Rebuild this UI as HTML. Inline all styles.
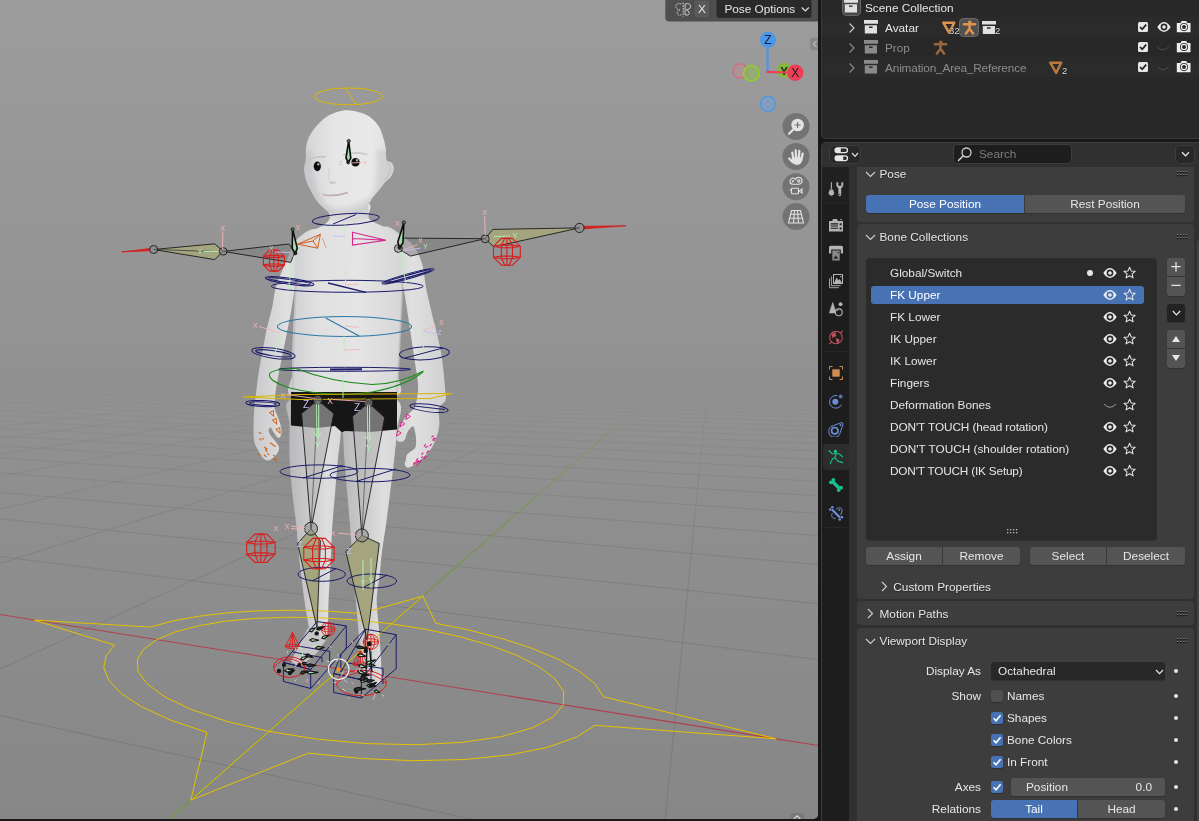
<!DOCTYPE html>
<html>
<head>
<meta charset="utf-8">
<style>
*{box-sizing:border-box;margin:0;padding:0}
html,body{width:1199px;height:821px;overflow:hidden;background:#181818;font-family:"Liberation Sans",sans-serif;font-size:11.8px;color:#e6e6e6}
.abs{position:absolute}
#vp{will-change:transform;position:absolute;left:0;top:0;width:818px;height:819px;border-radius:0 0 5px 0;overflow:hidden;background:#929292}
#vp svg{position:absolute;left:0;top:0}
#outlbg{position:absolute;left:821px;top:-6px;width:384px;height:145px;background:#282828;border-radius:5px;border:1px solid #383838}
#outl{will-change:transform;position:absolute;left:822px;top:-6px;width:383px;height:145px;overflow:hidden}
.orow{position:absolute;left:0;width:383px;height:20px}
#outlbg i{position:absolute;left:0;width:1px;height:20px;background:#2b2b2b;margin-top:-1px}
.orow.alt{background:#2b2b2b}
.t{position:absolute;white-space:nowrap;line-height:14px}
#propsbg{position:absolute;left:821px;top:142px;width:384px;height:690px;background:#303030;border-radius:5px;overflow:hidden;border:1px solid #3c3c3c}
#propsbg div{position:absolute;left:0;top:24px;width:1px;height:670px;background:#1d1d1d}
#props{will-change:transform;position:absolute;left:822px;top:142px;width:383px;height:690px;overflow:hidden}
#tabs{position:absolute;left:0;top:25px;width:27px;height:670px;background:#1d1d1d}
.panel{position:absolute;left:35px;width:337px;background:#3d3d3d;border-radius:4px}
.btn{position:absolute;box-shadow:0 1px 1px rgba(0,0,0,0.200);background:#545454;height:18px;text-align:center;line-height:18px;white-space:nowrap;color:#e6e6e6}
.btn.sel{background:#4772b3;color:#fff}
.lrow{position:absolute;left:5px;width:273px;height:18px;border-radius:3px}
.lrow .t{left:19px;top:2px}
.lbl{position:absolute;white-space:nowrap;text-align:right;line-height:14px}
.cb{position:absolute;width:12px;height:12px;border-radius:2.5px;background:#505050;box-shadow:0 1px 1px rgba(0,0,0,0.250)}
.cb.on{background:#4772b3}
.dot{position:absolute;width:4.400px;height:4.400px;border-radius:2.200px;background:#e4e4e4;margin:-0.200px 0 0 -0.200px}
</style>
</head>
<body>
<svg width="0" height="0" style="position:absolute">
<defs>
<symbol id="i-coll" viewBox="0 0 15 15"><path d="M0 1h14v3.600h-14z M0.800 6h12.200v8h-12.200z M5 7.200v1.600h3.600v-1.600z" fill-rule="evenodd"/></symbol>
<symbol id="i-mesh" viewBox="0 0 16 15"><path d="M2.300 2.700 L13.200 2.700 L8.200 12.800 Z" fill="none" stroke-width="2.500" stroke-linejoin="round"/></symbol>
<symbol id="i-arm" viewBox="0 0 15 15"><circle cx="7.800" cy="2.300" r="1.700"/><path d="M1.900 4.300 H13.100 M7.500 4.600 V8.800 L3.900 13.600 M7.500 8.800 L11.100 13.600" fill="none" stroke="currentColor" stroke-width="2.500" stroke-linecap="round" stroke-linejoin="round"/></symbol>
<symbol id="i-eye" viewBox="0 0 14 14"><path d="M0.300 7 C2.500 3.600 5 2.100 7 2.100 C9 2.100 11.500 3.600 13.700 7 C11.500 10.400 9 11.900 7 11.900 C5 11.900 2.500 10.400 0.300 7 Z M7 3.600 A3.400 3.400 0 1 0 7 10.400 A3.400 3.400 0 1 0 7 3.600 Z M7 5.200 A1.800 1.800 0 1 0 7 8.800 A1.800 1.800 0 1 0 7 5.200 Z" fill="#ececec" fill-rule="evenodd"/></symbol>
<symbol id="i-cam" viewBox="0 0 15 14"><path d="M0.800 4 h3.700 l1.100 -2.100 h4.600 l1.100 2.100 h3.200 v9.200 h-13.700 z M4.00 7.9 a4 4 0 1 0 8 0 a4 4 0 1 0 -8 0 z M4.80 7.9 a3.2 3.2 0 1 0 6.4 0 a3.2 3.2 0 1 0 -6.4 0 z M6.00 7.9 a2 2 0 1 0 4 0 a2 2 0 1 0 -4 0 z" fill="#ececec" fill-rule="evenodd"/></symbol>
<symbol id="i-star" viewBox="0 0 14 14"><path d="M7 1.300 L8.700 5.200 L12.900 5.600 L9.700 8.400 L10.700 12.600 L7 10.400 L3.300 12.600 L4.300 8.400 L1.100 5.600 L5.300 5.200 Z" fill="none" stroke="#e6e6e6" stroke-width="1.100" stroke-linejoin="round"/></symbol>
</defs>
</svg>
<div id="vp">
<svg width="818" height="819" viewBox="0 0 818 819">
<defs>
<linearGradient id="bg" x1="0" y1="0" x2="0" y2="1"><stop offset="0" stop-color="#9c9c9c"/><stop offset="0.45" stop-color="#929292"/><stop offset="1" stop-color="#878787"/></linearGradient>
</defs>
<rect width="818" height="819" fill="url(#bg)"/>
<!--SCENE-->
<defs><linearGradient id="gfade" x1="0" y1="342" x2="0" y2="819" gradientUnits="userSpaceOnUse"><stop offset="0" stop-color="#fff" stop-opacity="0"/><stop offset="0.05" stop-color="#fff" stop-opacity="0"/><stop offset="0.12" stop-color="#fff" stop-opacity="0.120"/><stop offset="0.22" stop-color="#fff" stop-opacity="0.400"/><stop offset="0.40" stop-color="#fff" stop-opacity="0.800"/><stop offset="0.60" stop-color="#fff" stop-opacity="1"/><stop offset="1" stop-color="#fff" stop-opacity="1"/></linearGradient><mask id="gmask" maskUnits="userSpaceOnUse" x="0" y="0" width="818" height="819"><rect x="0" y="0" width="818" height="819" fill="url(#gfade)"/></mask></defs>
<g mask="url(#gmask)" fill="none">
<path d="M-1728.3 417.5 L602.8 345.4 M-1729.2 420.0 L606.2 345.4 M-1730.1 422.8 L609.6 345.4 M-1731.2 425.7 L612.9 345.4 M-1732.2 428.8 L616.3 345.4 M-1733.4 432.2 L619.7 345.4 M-1734.7 435.8 L623.1 345.4 M-1736.1 439.7 L626.5 345.4 M-1737.6 444.0 L630.0 345.4 M-1739.2 448.7 L633.4 345.4 M-1741.0 453.9 L636.9 345.4 M-1743.0 459.5 L640.3 345.4 M-1745.1 465.8 L643.8 345.4 M-1747.6 472.8 L647.3 345.4 M-1750.3 480.6 L650.7 345.4 M-1753.4 489.4 L654.2 345.5 M-1756.8 499.4 L657.8 345.5 M-1760.8 510.8 L661.3 345.5 M-1765.4 524.0 L664.8 345.5 M-1770.8 539.5 L668.3 345.5 M-1777.2 557.9 L671.9 345.5 M-1784.9 580.0 L675.4 345.5 M-1794.4 607.1 L679.0 345.5 M-1806.3 641.3 L682.6 345.5 M-1821.7 685.6 L686.2 345.5 M-1842.5 745.3 L689.8 345.5 M-1872.0 830.0 L693.4 345.5 M-1917.3 959.8 L697.0 345.5 M-1995.3 1183.7 L700.7 345.5 M-2162.0 1662.1 L704.3 345.5 M151.1 6053.8 L711.7 345.5 M6088.1 6053.8 L715.3 345.5 M12025.1 6053.8 L719.0 345.5 M17962.0 6053.8 L722.7 345.6 M23899.0 6053.8 L726.4 345.6 M29836.0 6053.8 L730.2 345.6 M35772.9 6053.8 L733.9 345.6 M41709.9 6053.8 L737.7 345.6 M47646.9 6053.8 L741.4 345.6 M53583.8 6053.8 L745.2 345.6 M59520.8 6053.8 L749.0 345.6 M65457.8 6053.8 L752.8 345.6 M-1695.2 347.8 L7379.0 8083.5 M-1685.5 347.8 L20466.3 8083.5 M-1675.9 347.7 L33553.5 8083.5 M-1656.9 347.7 L59728.1 8083.5 M-1647.5 347.7 L72815.3 8083.5 M-1638.2 347.6 L85902.6 8083.5 M-1629.0 347.6 L98989.9 8083.5 M-1619.8 347.6 L25950.6 2223.5 M-1610.7 347.6 L11602.0 1153.8 M-1601.7 347.5 L7654.8 859.6 M-1592.7 347.5 L5807.8 721.9 M-1583.8 347.5 L4737.0 642.1 M-1575.0 347.5 L4038.1 590.0 M-1566.3 347.5 L3546.0 553.3 M-1557.6 347.4 L3180.8 526.0 M-1548.9 347.4 L2898.9 505.0 M-1540.4 347.4 L2674.8 488.3 M-1531.9 347.4 L2492.4 474.7 M-1523.5 347.4 L2341.0 463.4 M-1515.1 347.3 L2213.3 453.9 M-1506.8 347.3 L2104.2 445.8 M-1498.6 347.3 L2009.9 438.8 M-1490.4 347.3 L1927.5 432.6 M-1482.3 347.3 L1855.0 427.2 M-1474.2 347.2 L1790.6 422.4 M-1466.2 347.2 L1733.1 418.1 M-1458.3 347.2 L1681.4 414.3 M-1450.4 347.2 L1634.7 410.8 M-1442.6 347.2 L1592.3 407.6 M-1434.8 347.1 L1553.6 404.7 M-1427.1 347.1 L1518.2 402.1 M-1419.4 347.1 L1485.7 399.7 M-1411.8 347.1 L1455.6 397.4 M-1404.3 347.1 L1427.8 395.4 M-1396.8 347.1 L1402.0 393.4 M-1389.3 347.0 L1378.1 391.7 M-1381.9 347.0 L1355.7 390.0 M-1374.6 347.0 L1334.7 388.4 M-1367.3 347.0 L1315.1 387.0 M-1360.1 347.0 L1296.7 385.6 M-1352.9 347.0 L1279.4 384.3 M-1345.8 346.9 L1263.1 383.1 M-1338.7 346.9 L1247.7 381.9 M-1331.6 346.9 L1233.1 380.8 M-1324.6 346.9 L1219.3 379.8 M-1317.7 346.9 L1206.2 378.8 M-1310.8 346.9 L1193.8 377.9 M-1303.9 346.8 L1182.0 377.0 M-1297.1 346.8 L1170.7 376.2 M-1290.4 346.8 L1160.0 375.4 M-1283.7 346.8 L1149.7 374.6 M-1277.0 346.8 L1140.0 373.9 M-1270.4 346.8 L1130.6 373.2 M-1263.8 346.7 L1121.7 372.5 M-1257.3 346.7 L1113.1 371.9 M-1250.8 346.7 L1104.8 371.3 M-1244.3 346.7 L1097.0 370.7 M-1237.9 346.7 L1089.4 370.1 M-1231.6 346.7 L1082.1 369.6 M-1225.2 346.6 L1075.1 369.1 M-1218.9 346.6 L1068.3 368.6 M-1212.7 346.6 L1061.8 368.1 M-1206.5 346.6 L1055.5 367.6 M-1200.3 346.6 L1049.5 367.2 M-1194.2 346.6 L1043.6 366.7 M-1188.1 346.6 L1038.0 366.3 M-1182.1 346.5 L1032.5 365.9 M-1176.1 346.5 L1027.3 365.5 M-1170.1 346.5 L1022.2 365.1 M-1164.2 346.5 L1017.2 364.8 M-1158.3 346.5 L1012.4 364.4 M-1152.4 346.5 L1007.8 364.1 M-1146.6 346.5 L1003.3 363.7 M-1140.8 346.4 L998.9 363.4 M-1135.1 346.4 L994.7 363.1 M-1129.4 346.4 L990.6 362.8 M-1123.7 346.4 L986.6 362.5 M-1118.0 346.4 L982.7 362.2 M-1112.4 346.4 L978.9 361.9 M-1106.9 346.4 L975.3 361.6 M-1101.3 346.3 L971.7 361.4 M-1095.8 346.3 L968.2 361.1" stroke="#555" stroke-opacity="0.260" stroke-width="1"/>
<path d="M-1666.4 347.7 L69997.4 11823.7" stroke="#b0414b" stroke-width="1.100"/>
<path d="M-5376.4 5693.9 L708.0 345.5" stroke="#6f9a3c" stroke-width="1.100"/>
</g>
<defs>
<linearGradient id="skinH" x1="0" y1="0" x2="1" y2="0"><stop offset="0" stop-color="#d4d4d6"/><stop offset="0.35" stop-color="#e6e6e6"/><stop offset="0.75" stop-color="#e9e9e9"/><stop offset="1" stop-color="#dcdcdc"/></linearGradient>
<linearGradient id="torsoG" x1="0" y1="0" x2="1" y2="0"><stop offset="0" stop-color="#cdcdd0"/><stop offset="0.25" stop-color="#e0e0e0"/><stop offset="0.6" stop-color="#e5e5e5"/><stop offset="1" stop-color="#d6d6d6"/></linearGradient>
<linearGradient id="legG" x1="0" y1="0" x2="1" y2="0"><stop offset="0" stop-color="#b6b6b9"/><stop offset="0.35" stop-color="#c8c8ca"/><stop offset="0.7" stop-color="#dedede"/><stop offset="1" stop-color="#d6d6d6"/></linearGradient>
<linearGradient id="armG" x1="0" y1="0" x2="1" y2="0"><stop offset="0" stop-color="#c9c9cc"/><stop offset="0.5" stop-color="#e0e0e0"/><stop offset="1" stop-color="#d0d0d2"/></linearGradient>
<linearGradient id="neckG" x1="0" y1="0" x2="0" y2="1"><stop offset="0" stop-color="#c6c6c8"/><stop offset="1" stop-color="#dedede"/></linearGradient>
<filter id="b1"><feGaussianBlur stdDeviation="0.6"/></filter>
<filter id="b3"><feGaussianBlur stdDeviation="2.5"/></filter>
</defs>
<g filter="url(#b1)">
<path d="M289.6 425.0 C289.5 435.1 289.2 449.1 289.6 460.4 C290.1 471.6 291.2 481.8 292.3 492.5 C293.4 503.2 295.4 516.7 296.3 524.7 C297.2 532.8 296.9 533.6 297.6 540.8 C298.3 547.9 299.2 557.8 300.3 567.6 C301.4 577.4 303.1 591.0 304.3 599.7 C305.5 608.4 306.4 613.9 307.5 619.6 C308.6 625.3 309.2 630.6 311.0 634.0 C312.8 637.4 315.3 639.7 318.0 640.0 C320.7 640.3 325.3 639.4 327.0 636.0 C328.7 632.6 327.8 625.6 328.1 619.6 C328.4 613.6 328.3 606.6 328.6 599.7 C328.9 592.8 329.4 586.3 329.8 578.3 C330.2 570.3 330.7 560.4 331.1 551.5 C331.5 542.6 331.7 534.5 332.4 524.7 C333.1 514.9 334.2 503.2 335.1 492.5 C336.0 481.8 336.8 470.8 337.8 460.4 C338.8 450.0 340.5 440.1 341.0 430.0 C341.5 419.9 349.5 405.0 341.0 400.0 C332.5 395.0 298.6 395.8 290.0 400.0 C281.4 404.2 289.7 414.9 289.6 425.0 Z" fill="url(#legG)"/>
<path d="M343.0 430.0 C343.2 440.1 343.8 450.0 344.5 460.4 C345.2 470.8 346.3 481.8 347.2 492.5 C348.1 503.2 349.1 514.9 349.9 524.7 C350.7 534.5 351.3 542.6 352.0 551.5 C352.7 560.4 353.3 570.3 353.9 578.3 C354.5 586.3 355.1 591.5 355.8 599.7 C356.5 607.9 357.5 619.1 358.2 627.5 C358.9 635.9 359.0 642.6 360.0 650.0 C361.0 657.4 362.0 666.3 364.0 672.0 C366.0 677.7 369.3 682.4 372.0 684.0 C374.7 685.6 378.9 685.4 380.4 681.4 C381.9 677.4 381.3 669.0 381.0 660.0 C380.7 651.0 379.5 637.5 378.8 627.5 C378.1 617.5 376.6 607.9 376.7 599.7 C376.8 591.5 378.4 586.3 379.3 578.3 C380.2 570.3 380.9 560.4 382.0 551.5 C383.1 542.6 384.6 534.5 386.0 524.7 C387.4 514.9 388.8 503.2 390.1 492.5 C391.5 481.8 393.0 470.6 394.1 460.4 C395.2 450.1 396.3 441.1 396.8 431.0 C397.3 420.9 406.0 405.2 397.0 400.0 C388.0 394.8 352.0 395.0 343.0 400.0 C334.0 405.0 342.8 419.9 343.0 430.0 Z" fill="url(#legG)"/>
<path d="M308 628 L298 648 L291 661 L299 667 L316 654 L326 640 Z" fill="#c6c6c8"/>
<path d="M315.0 229.5 C311.7 227.2 304.1 233.3 300.3 236.2 C296.5 239.1 294.8 242.4 292.3 246.9 C289.9 251.4 288.3 256.5 285.6 263.0 C282.9 269.5 278.4 278.3 276.2 285.7 C274.0 293.1 273.8 300.0 272.2 307.2 C270.6 314.4 268.4 321.5 266.8 328.6 C265.2 335.7 264.1 342.9 262.8 350.0 C261.5 357.1 259.9 364.4 258.8 371.5 C257.7 378.6 256.8 387.3 256.1 392.9 C255.4 398.5 255.0 400.5 254.6 405.0 C254.2 409.5 253.7 414.2 253.6 420.0 C253.5 425.8 253.3 435.0 254.0 440.0 C254.7 445.0 256.5 447.0 258.0 450.0 C259.5 453.0 261.2 456.2 263.0 458.0 C264.8 459.8 266.7 460.7 268.5 460.5 C270.3 460.3 272.4 458.4 274.0 457.0 C275.6 455.6 277.2 453.6 278.0 452.0 C278.8 450.4 279.3 449.2 279.0 447.5 C278.7 445.8 277.3 443.9 276.0 442.0 C274.7 440.1 272.2 437.9 271.0 436.0 C269.8 434.1 268.6 431.9 268.5 430.5 C268.4 429.1 269.7 427.2 270.5 427.5 C271.3 427.8 272.4 430.4 273.5 432.0 C274.6 433.6 275.9 436.1 277.0 437.0 C278.1 437.9 279.2 438.1 280.0 437.3 C280.8 436.5 281.4 434.1 281.5 432.0 C281.6 429.9 281.2 427.7 280.5 425.0 C279.8 422.3 278.5 418.8 277.5 416.0 C276.5 413.2 274.9 410.7 274.5 408.0 C274.1 405.3 274.5 403.4 274.8 400.0 C275.1 396.6 275.3 393.2 276.2 387.6 C277.1 382.0 278.6 374.2 280.2 366.1 C281.8 358.1 283.8 348.2 285.6 339.3 C287.4 330.4 289.3 321.0 290.9 312.5 C292.4 304.0 293.4 295.5 294.9 288.4 C296.4 281.3 295.8 276.4 300.0 270.0 C304.2 263.6 317.5 256.8 320.0 250.0 C322.5 243.2 318.3 231.8 315.0 229.5 Z" fill="url(#armG)"/>
<path d="M384.7 226.8 C388.2 224.3 395.9 231.5 400.8 234.8 C405.7 238.2 410.6 242.0 414.2 246.9 C417.8 251.8 420.2 257.4 422.2 264.3 C424.2 271.2 424.6 280.4 426.2 288.4 C427.8 296.4 429.6 304.0 431.6 312.5 C433.6 321.0 436.5 331.2 438.3 339.3 C440.1 347.4 441.2 352.8 442.3 360.8 C443.4 368.9 444.5 381.1 445.0 387.6 C445.5 394.1 446.5 396.5 445.5 400.0 C444.5 403.5 439.9 404.6 438.9 408.6 C437.9 412.6 439.8 419.5 439.4 424.2 C439.0 428.9 438.1 432.6 436.8 436.6 C435.5 440.6 433.7 444.7 431.6 448.0 C429.5 451.3 427.2 453.5 424.4 456.3 C421.6 459.1 417.8 462.7 415.0 464.6 C412.2 466.5 409.5 467.7 407.8 467.7 C406.1 467.7 405.1 465.8 404.7 464.6 C404.3 463.4 405.3 462.1 405.7 460.4 C406.1 458.7 405.8 456.3 407.3 454.2 C408.9 452.1 413.5 450.4 415.0 448.0 C416.5 445.6 416.1 442.5 416.1 439.7 C416.1 436.9 415.5 433.6 415.0 431.4 C414.5 429.1 414.2 426.2 413.0 426.2 C411.8 426.2 409.2 429.1 407.8 431.4 C406.4 433.6 405.9 438.0 404.7 439.7 C403.5 441.4 401.9 441.8 400.5 441.8 C399.1 441.8 397.0 441.1 396.4 439.7 C395.8 438.3 396.2 435.9 396.9 433.5 C397.6 431.1 399.0 428.0 400.5 425.2 C402.0 422.4 403.8 419.3 405.7 416.9 C407.6 414.5 410.3 412.2 411.9 410.7 C413.4 409.1 413.9 411.5 415.0 407.6 C416.1 403.8 418.1 394.5 418.2 387.6 C418.3 380.7 416.6 374.2 415.5 366.1 C414.4 358.1 412.8 348.2 411.5 339.3 C410.2 330.4 408.8 321.0 407.5 312.5 C406.2 304.0 405.1 295.8 403.5 288.4 C401.9 281.0 401.9 274.4 398.0 268.0 C394.1 261.6 382.2 256.9 380.0 250.0 C377.8 243.1 381.2 229.3 384.7 226.8 Z" fill="url(#armG)"/>
<path d="M329.8 218.0 C328.5 221.8 326.1 223.3 322.0 226.0 C317.9 228.7 309.3 230.7 305.0 234.0 C300.7 237.3 297.8 240.3 296.0 246.0 C294.2 251.7 294.7 260.9 294.5 268.0 C294.3 275.1 295.1 279.6 295.0 288.4 C294.9 297.2 294.1 310.3 293.6 320.6 C293.2 330.9 292.5 341.1 292.3 350.0 C292.1 358.9 292.4 366.5 292.3 374.2 C292.2 381.9 282.9 391.7 291.5 396.0 C300.1 400.3 326.4 400.0 344.0 400.0 C361.6 400.0 388.0 400.3 397.0 396.0 C406.0 391.7 397.7 381.9 398.1 374.2 C398.5 366.5 398.9 358.9 399.4 350.0 C399.8 341.1 400.4 330.9 400.8 320.6 C401.2 310.3 401.7 297.5 402.1 288.4 C402.5 279.3 403.0 273.1 403.0 266.0 C403.0 258.9 403.5 251.7 402.0 246.0 C400.5 240.3 397.7 235.5 394.0 232.0 C390.3 228.5 384.2 227.3 380.0 225.0 C375.8 222.7 370.5 221.7 368.5 218.0 C366.5 214.3 374.4 205.5 368.0 203.0 C361.6 200.5 336.4 200.5 330.0 203.0 C323.6 205.5 331.1 214.2 329.8 218.0 Z" fill="url(#torsoG)"/>
<path d="M330 205 L368 203 L368.500 218 Q352 227 330 220 Z" fill="url(#neckG)"/>
<path d="M296 280 Q294 330 292.500 392" fill="none" stroke="#bcbcc2" stroke-width="2" opacity="0.700"/><path d="M402.500 280 Q400.500 330 397 392" fill="none" stroke="#c2c2c6" stroke-width="2" opacity="0.700"/>
<path d="M291.0 392.0 L397.0 392.0 L397.0 429.5 L370.0 432.0 L345.0 431.0 L341.8 432.3 L335.0 426.0 L316.0 428.0 L290.9 425.6 Z" fill="#161616"/>
<path d="M344.6 110.3 C339.9 110.8 333.8 112.9 329.6 115.0 C325.4 117.1 322.5 119.8 319.3 123.0 C316.1 126.2 312.8 130.2 310.6 134.0 C308.4 137.8 307.1 141.5 306.3 145.9 C305.5 150.3 306.2 156.5 305.8 160.2 C305.4 163.9 304.2 164.8 304.2 168.0 C304.2 171.2 304.9 175.8 305.8 179.2 C306.7 182.6 308.1 185.2 309.8 188.6 C311.5 192.0 313.9 196.5 316.1 199.7 C318.3 202.9 320.9 205.5 323.2 207.6 C325.4 209.7 326.8 211.4 329.6 212.4 C332.4 213.4 336.3 213.7 340.0 213.5 C343.7 213.3 347.4 212.5 352.0 211.0 C356.6 209.5 364.2 206.7 367.6 204.5 C371.0 202.3 370.2 200.8 372.3 198.1 C374.4 195.4 378.1 191.2 380.2 188.6 C382.3 186.0 383.1 184.4 385.0 182.3 C386.9 180.2 389.9 178.4 391.3 176.0 C392.8 173.6 393.7 170.2 393.7 168.0 C393.7 165.8 392.5 163.8 391.3 162.5 C390.1 161.2 387.5 162.4 386.6 160.2 C385.7 157.9 386.3 152.7 385.8 149.0 C385.3 145.3 384.6 141.8 383.4 138.0 C382.2 134.2 381.0 129.7 378.6 126.1 C376.2 122.5 372.6 119.0 369.2 116.6 C365.8 114.2 362.1 113.0 358.0 111.9 C353.9 110.9 349.3 109.8 344.6 110.3 Z" fill="url(#skinH)"/>
</g>
<clipPath id="headclip"><path d="M344.6 110.3 C339.9 110.8 333.8 112.9 329.6 115.0 C325.4 117.1 322.5 119.8 319.3 123.0 C316.1 126.2 312.8 130.2 310.6 134.0 C308.4 137.8 307.1 141.5 306.3 145.9 C305.5 150.3 306.2 156.5 305.8 160.2 C305.4 163.9 304.2 164.8 304.2 168.0 C304.2 171.2 304.9 175.8 305.8 179.2 C306.7 182.6 308.1 185.2 309.8 188.6 C311.5 192.0 313.9 196.5 316.1 199.7 C318.3 202.9 320.9 205.5 323.2 207.6 C325.4 209.7 326.8 211.4 329.6 212.4 C332.4 213.4 336.3 213.7 340.0 213.5 C343.7 213.3 347.4 212.5 352.0 211.0 C356.6 209.5 364.2 206.7 367.6 204.5 C371.0 202.3 370.2 200.8 372.3 198.1 C374.4 195.4 378.1 191.2 380.2 188.6 C382.3 186.0 383.1 184.4 385.0 182.3 C386.9 180.2 389.9 178.4 391.3 176.0 C392.8 173.6 393.7 170.2 393.7 168.0 C393.7 165.8 392.5 163.8 391.3 162.5 C390.1 161.2 387.5 162.4 386.6 160.2 C385.7 157.9 386.3 152.7 385.8 149.0 C385.3 145.3 384.6 141.8 383.4 138.0 C382.2 134.2 381.0 129.7 378.6 126.1 C376.2 122.5 372.6 119.0 369.2 116.6 C365.8 114.2 362.1 113.0 358.0 111.9 C353.9 110.9 349.3 109.8 344.6 110.3 Z"/></clipPath>
<g clip-path="url(#headclip)"><g filter="url(#b3)">
<path d="M300 150 L312 150 Q311 185 326 206 L340 218 L318 218 L300 190 Z" fill="#bfbfc4" opacity="0.600"/>
<path d="M376 150 Q381 176 368 206 L392 200 L396 150 Z" fill="#c4c4c8" opacity="0.550"/>
<path d="M326 205 Q345 214 372 196 L372 222 L326 222 Z" fill="#c2c2c6" opacity="0.500"/>
</g></g>
<g filter="url(#b1)">
<path d="M386.500 163 Q391 165 390 171 Q388 177 384.500 180" fill="none" stroke="#c4c4c4" stroke-width="1.300"/>
<ellipse cx="332.500" cy="182.500" rx="3.500" ry="1.600" fill="#c6c6c8" opacity="0.800"/>
<path d="M329.500 168 Q328 176 329.500 181" fill="none" stroke="#d6d6d8" stroke-width="1.500"/>
<path d="M307.500 160.500 Q316 155.500 325.500 157" fill="none" stroke="#c6c6c6" stroke-width="1.800"/>
<path d="M343 155 Q355 151 367.500 154.500" fill="none" stroke="#cacaca" stroke-width="1.800"/>
<path d="M322.500 194.500 Q334 197 347.800 192.600" fill="none" stroke="#c4aeb2" stroke-width="1.700"/>
</g>
<ellipse cx="317.300" cy="166.400" rx="3.600" ry="4.800" fill="#0c0c0c"/><ellipse cx="318.300" cy="164.300" rx="1" ry="1.300" fill="#bbb"/>
<ellipse cx="355.500" cy="162.300" rx="4.200" ry="4.300" fill="#0c0c0c"/><ellipse cx="357" cy="160.300" rx="1" ry="1.200" fill="#bbb"/>
<path d="M563.3 704.8 L563.7 691.9 L555.2 679.0 L539.1 666.7 L516.8 655.3 L489.6 645.2 L459.0 636.5 L425.9 629.3 L391.4 623.8 L356.3 620.0 L321.5 617.8 L287.6 617.2 L255.3 618.4 L225.4 621.2 L198.5 625.8 L175.3 631.9 L156.8 639.7 L143.8 648.9 L137.3 659.6 L138.1 671.3 L147.1 683.9 L164.9 696.9 L191.5 709.6 L226.6 721.3 L269.0 731.4 L316.7 739.1 L366.9 743.6 L416.6 744.7 L462.6 742.3 L501.9 736.5 L532.4 727.8 L553.0 717.0 Z" fill="none" stroke="#e6c200" stroke-width="1"/>
<path d="M776.2 738.8 L603.8 696.8 L594.6 683.5 L578.6 670.7 L557.0 658.7 L530.9 647.9 L501.4 638.4 L469.4 630.1 L435.8 623.3 L422.8 596.2 L360.8 613.5 L326.2 611.1 L292.3 610.2 L259.6 610.8 L228.6 612.7 L199.7 616.1 L173.4 620.8 L150.4 627.1 L34.4 620.1 L114.6 645.2 L106.1 655.7 L103.8 667.4 L108.5 679.9 L120.9 693.2 L141.4 706.7 L170.2 720.0 L207.0 732.4 L190.8 800.1 L308.4 753.1 L361.3 758.5 L414.4 760.7 L464.8 759.5 L509.9 754.9 L547.5 747.3 L576.1 737.3 L595.1 725.4 Z" fill="none" stroke="#e6c200" stroke-width="1"/>
<path d="M192.5 798.7 L423.8 595.3" fill="none" stroke="#e6c200" stroke-width="1"/>
<ellipse cx="348.4" cy="96.4" rx="34" ry="8.4" fill="none" stroke="#dcb800" stroke-width="1"/>
<path d="M345 88.2 L356.5 104.3" stroke="#dcb800" stroke-width="1" fill="none"/>
<ellipse cx="345.8" cy="219.3" rx="33.5" ry="5.6" fill="none" stroke="#1b1b6b" stroke-width="1" transform="rotate(-3.5 345.8 219.3)"/>
<path d="M333 224 L356 214.5" stroke="#1b1b6b" stroke-width="1" fill="none"/>
<ellipse cx="347.2" cy="286.3" rx="76" ry="6" fill="none" stroke="#1b1b6b" stroke-width="1"/>
<path d="M328 283 L366 292.3" stroke="#1b1b6b" stroke-width="1.3" fill="none"/>
<ellipse cx="289.6" cy="281.2" rx="24.5" ry="3" fill="none" stroke="#1b1b6b" stroke-width="1" transform="rotate(8 289.6 281.2)"/>
<ellipse cx="289.6" cy="281.2" rx="21" ry="1.6" fill="none" stroke="#1b1b6b" stroke-width="1" transform="rotate(8 289.6 281.2)"/>
<ellipse cx="408" cy="276.3" rx="27" ry="2.5" fill="none" stroke="#1b1b6b" stroke-width="1" transform="rotate(-15.5 408 276.3)"/>
<ellipse cx="408" cy="276.3" rx="24" ry="1.2" fill="none" stroke="#1b1b6b" stroke-width="1.4" transform="rotate(-15.5 408 276.3)"/>
<ellipse cx="344.5" cy="326.5" rx="67" ry="10" fill="none" stroke="#2a78a8" stroke-width="1.1"/>
<path d="M325.7 318 L359.2 336" stroke="#2a78a8" stroke-width="1.1" fill="none"/>
<ellipse cx="273.5" cy="353.3" rx="21.8" ry="5" fill="none" stroke="#1b1b6b" stroke-width="1" transform="rotate(8 273.5 353.3)"/>
<ellipse cx="273.5" cy="353.3" rx="18" ry="2.6" fill="none" stroke="#1b1b6b" stroke-width="1" transform="rotate(8 273.5 353.3)"/>
<ellipse cx="424.4" cy="353.3" rx="25" ry="6.5" fill="none" stroke="#1b1b6b" stroke-width="1" transform="rotate(-3 424.4 353.3)"/>
<path d="M405 358 L443 348" stroke="#1b1b6b" stroke-width="1" fill="none"/>
<ellipse cx="344.5" cy="369.3" rx="66" ry="2" fill="none" stroke="#1b1b6b" stroke-width="1"/>
<path d="M330 369.6 L362 369.2" stroke="#1b1b6b" stroke-width="2" fill="none"/>
<path d="M296 368.500 Q272 369 269.500 374 Q268 381 290 388 Q330 398 372 392 Q405 386 423 372" fill="none" stroke="#1c8a1c" stroke-width="1.1"/>
<path d="M296 368.500 Q330 382 372 384.500 Q400 384 423.500 371" fill="none" stroke="#1c8a1c" stroke-width="1.1"/>
<path d="M243 397 L300 394.500 L452 393.500 L430 398.500 L300 399.500 Z" fill="none" stroke="#d8b600" stroke-width="1"/>
<ellipse cx="262.8" cy="403.6" rx="17" ry="3" fill="none" stroke="#1b1b6b" stroke-width="1" transform="rotate(3 262.8 403.6)"/>
<ellipse cx="262.8" cy="403.6" rx="13" ry="1.6" fill="none" stroke="#1b1b6b" stroke-width="1" transform="rotate(3 262.8 403.6)"/>
<ellipse cx="429" cy="408.1" rx="19.2" ry="3.8" fill="none" stroke="#1b1b6b" stroke-width="1" transform="rotate(7 429 408.1)"/>
<path d="M414 406 L445 409.5" stroke="#1b1b6b" stroke-width="1" fill="none"/>
<path d="M121.900 251.900 L149.400 248.600 L149.400 250.800 Z" fill="#d42020" stroke="#d42020" stroke-width="0.800"/>
<path d="M153.7 249.5 L214.6 243.8 L223.2 251.4 L214.6 259.6 Z" fill="#a4a47e" fill-opacity="1.0" stroke="#1a1a1a" stroke-width="0.900" stroke-linejoin="round"/>
<path d="M153.7 249.5 L214.6 251.5" stroke="#1a1a1a" stroke-width="0.6" fill="none"/>
<path d="M223.2 251.4 L288.9 244.0 L295.0 252.5 L290.7 262.4 Z" fill="#7c7c7c" fill-opacity="0.55" stroke="#1a1a1a" stroke-width="0.900" stroke-linejoin="round"/>
<circle cx="153.7" cy="249.5" r="4" fill="#8d8d8d" fill-opacity="0.550" stroke="#1a1a1a" stroke-width="0.900"/>
<circle cx="223.2" cy="251.4" r="3.8" fill="#8d8d8d" fill-opacity="0.550" stroke="#1a1a1a" stroke-width="0.900"/>
<g fill="none" stroke="#d81e1e" stroke-width="1.1" stroke-linejoin="round"><path d="M284.4 265.0 L278.3 271.1 L269.5 271.1 L263.4 265.0 L263.4 256.2 L269.5 250.1 L278.3 250.1 L284.4 256.2 Z"/><path d="M278.3 265.0 L275.7 271.1 L272.1 271.1 L269.5 265.0 L269.5 256.2 L272.1 250.1 L275.7 250.1 L278.3 256.2 Z"/><path d="M263.4 256.3 L269.3 257.4 L278.5 257.4 L284.4 256.3 L278.5 255.4 L269.3 255.4 Z"/><path d="M263.4 264.9 L269.3 266.1 L278.5 266.1 L284.4 264.9 L278.5 264.0 L269.3 264.0 Z"/><path d="M273.9 250.1 L273.9 271.1"/></g>
<path d="M583.800 226.300 L626.100 225.800 L583.800 228.800 Z" fill="#d42020" stroke="#d42020" stroke-width="0.800"/>
<path d="M398.4 248.5 L403.9 238.1 L485.0 238.7 L410.4 256.1 Z" fill="#7c7c7c" fill-opacity="0.55" stroke="#1a1a1a" stroke-width="0.900" stroke-linejoin="round"/>
<path d="M485.2 238.8 L492.8 229.4 L579.5 227.9 L493.8 246.8 Z" fill="#a4a47e" fill-opacity="1.0" stroke="#1a1a1a" stroke-width="0.900" stroke-linejoin="round"/>
<circle cx="398.4" cy="248.5" r="4" fill="#8d8d8d" fill-opacity="0.550" stroke="#1a1a1a" stroke-width="0.900"/>
<circle cx="485.2" cy="238.8" r="4" fill="#8d8d8d" fill-opacity="0.550" stroke="#1a1a1a" stroke-width="0.900"/>
<circle cx="579.5" cy="227.9" r="4.6" fill="#8d8d8d" fill-opacity="0.550" stroke="#1a1a1a" stroke-width="0.900"/>
<g fill="none" stroke="#d81e1e" stroke-width="1.1" stroke-linejoin="round"><path d="M520.3 257.3 L512.4 265.2 L501.4 265.2 L493.5 257.3 L493.5 246.3 L501.4 238.4 L512.4 238.4 L520.3 246.3 Z"/><path d="M512.5 257.3 L509.2 265.2 L504.6 265.2 L501.3 257.3 L501.3 246.3 L504.6 238.4 L509.2 238.4 L512.5 246.3 Z"/><path d="M493.6 246.3 L501.1 247.7 L512.7 247.7 L520.2 246.3 L512.7 245.1 L501.1 245.1 Z"/><path d="M493.6 257.3 L501.1 258.8 L512.7 258.8 L520.2 257.3 L512.7 256.1 L501.1 256.1 Z"/><path d="M506.9 238.5 L506.9 265.1"/></g>
<path d="M292.6 229.4 L292.2 248.7 L295.3 253.2 L297.3 248.1 Z" fill="#9fdcaa" stroke="#0c0c0c" stroke-width="1.600" stroke-linejoin="round"/><circle cx="292.6" cy="229.4" r="1.600" fill="#4c7a55" stroke="#111" stroke-width="0.800"/><circle cx="295.3" cy="253.2" r="1.600" fill="#222" stroke="#111" stroke-width="0.800"/>
<path d="M403.9 222.5 L397.8 242.0 L399.5 247.5 L402.9 243.0 Z" fill="#9fdcaa" stroke="#0c0c0c" stroke-width="1.600" stroke-linejoin="round"/><circle cx="403.9" cy="222.5" r="1.600" fill="#4c7a55" stroke="#111" stroke-width="0.800"/><circle cx="399.5" cy="247.5" r="1.600" fill="#222" stroke="#111" stroke-width="0.800"/>
<path d="M348.7 141.0 L346.0 158.0 L348.3 162.3 L350.8 158.1 Z" fill="#9fdcaa" stroke="#0c0c0c" stroke-width="1.600" stroke-linejoin="round"/><circle cx="348.7" cy="141" r="1.600" fill="#4c7a55" stroke="#111" stroke-width="0.800"/><circle cx="348.3" cy="162.3" r="1.600" fill="#222" stroke="#111" stroke-width="0.800"/>
<path d="M297.600 244.200 L320.400 234.300 L317.700 248.200 Z M297.600 244.200 L313 241 L320.400 234.300 M313 241 L317.700 248.200" fill="none" stroke="#d2601a" stroke-width="1"/>
<path d="M322.500 238 L326 248" stroke="#e58a6a" stroke-width="0.800"/>
<path d="M352.500 232.200 L386 240.200 L352.500 245 Z M352.500 238.500 L386 240.200" fill="none" stroke="#d6248a" stroke-width="1.100"/>
<path d="M317.7 400.0 L333.8 413.5 L311.0 528.7 L301.6 413.5 Z" fill="#b4b4b4" fill-opacity="0.6" stroke="#1a1a1a" stroke-width="0.900" stroke-linejoin="round"/>
<path d="M317.7 400 L311 528.7" stroke="#1a1a1a" stroke-width="0.5" fill="none"/>
<path d="M368.6 402.8 L384.7 417.5 L361.9 535.4 L352.5 416.2 Z" fill="#b4b4b4" fill-opacity="0.6" stroke="#1a1a1a" stroke-width="0.900" stroke-linejoin="round"/>
<path d="M368.6 402.8 L361.9 535.4" stroke="#1a1a1a" stroke-width="0.5" fill="none"/>
<path d="M311.0 528.7 L320.4 540.8 L317.0 628.0 L297.6 543.5 Z" fill="#a4a47e" fill-opacity="1.0" stroke="#1a1a1a" stroke-width="0.900" stroke-linejoin="round"/>
<path d="M361.9 535.4 L379.3 543.5 L367.0 640.0 L345.8 551.5 Z" fill="#a4a47e" fill-opacity="1.0" stroke="#1a1a1a" stroke-width="0.900" stroke-linejoin="round"/>
<circle cx="317.7" cy="400" r="4.5" fill="#8d8d8d" fill-opacity="0.550" stroke="#1a1a1a" stroke-width="0.900"/>
<circle cx="368.6" cy="402.8" r="4.5" fill="#8d8d8d" fill-opacity="0.550" stroke="#1a1a1a" stroke-width="0.900"/>
<circle cx="311" cy="528.7" r="6.5" fill="#8d8d8d" fill-opacity="0.550" stroke="#1a1a1a" stroke-width="0.900"/>
<circle cx="361.9" cy="535.4" r="6.5" fill="#8d8d8d" fill-opacity="0.550" stroke="#1a1a1a" stroke-width="0.900"/>
<ellipse cx="319" cy="471.6" rx="38.9" ry="6.7" fill="none" stroke="#1b1b6b" stroke-width="1"/>
<path d="M303 478 L343 465.5" stroke="#1b1b6b" stroke-width="1" fill="none"/>
<ellipse cx="370" cy="475.1" rx="40" ry="6.7" fill="none" stroke="#1b1b6b" stroke-width="1"/>
<path d="M356 481.5 L396 469" stroke="#1b1b6b" stroke-width="1" fill="none"/>
<ellipse cx="321.7" cy="574.3" rx="23.7" ry="7" fill="none" stroke="#1b1b6b" stroke-width="1"/>
<path d="M312 581 L336 568.5" stroke="#1b1b6b" stroke-width="1" fill="none"/>
<ellipse cx="371.8" cy="581" rx="24.8" ry="7" fill="none" stroke="#1b1b6b" stroke-width="1"/>
<path d="M362 588 L387 575" stroke="#1b1b6b" stroke-width="1" fill="none"/>
<g fill="none" stroke="#d81e1e" stroke-width="1.1" stroke-linejoin="round"><path d="M275.1 554.2 L266.8 562.5 L255.0 562.5 L246.7 554.2 L246.7 542.4 L255.0 534.1 L266.8 534.1 L275.1 542.4 Z"/><path d="M266.9 554.2 L263.4 562.5 L258.4 562.5 L254.9 554.2 L254.9 542.4 L258.4 534.1 L263.4 534.1 L266.9 542.4 Z"/><path d="M246.7 542.4 L254.7 544.0 L267.1 544.0 L275.1 542.4 L267.1 541.2 L254.7 541.2 Z"/><path d="M246.7 554.2 L254.7 555.7 L267.1 555.7 L275.1 554.2 L267.1 552.9 L254.7 552.9 Z"/><path d="M260.9 534.1 L260.9 562.5"/></g>
<g fill="none" stroke="#d81e1e" stroke-width="1.1" stroke-linejoin="round"><path d="M334.2 559.9 L325.3 568.8 L312.7 568.8 L303.8 559.9 L303.8 547.3 L312.7 538.4 L325.3 538.4 L334.2 547.3 Z"/><path d="M325.4 559.9 L321.7 568.8 L316.3 568.8 L312.6 559.9 L312.6 547.3 L316.3 538.4 L321.7 538.4 L325.4 547.3 Z"/><path d="M303.8 547.3 L312.4 549.0 L325.6 549.0 L334.2 547.3 L325.6 546.0 L312.4 546.0 Z"/><path d="M303.8 559.9 L312.4 561.5 L325.6 561.5 L334.2 559.9 L325.6 558.5 L312.4 558.5 Z"/><path d="M319 538.4 L319 568.8"/></g>
<path d="M316.700 404 L316.700 437 M318.700 404 L318.700 437 M314.500 433 L317.700 438.500 L321 433" stroke="#b6f0b6" stroke-width="1" fill="none"/>
<path d="M367.600 406 L367.600 440 M369.600 406 L369.600 440 M365.500 436 L368.600 441.500 L372 436" stroke="#b6f0b6" stroke-width="1" fill="none"/>
<path d="M363 560 L363 590 M371 558 L371 588" stroke="#b6f0b6" stroke-width="1" fill="none"/>
<path d="M283.4 662.4 L310.7 669.5 L310.7 688.5 L283.4 681.4 Z" fill="none" stroke="#1b1b6b" stroke-width="1" stroke-linejoin="round"/>
<path d="M283.4 662.4 L317.0 621.5 L346.3 625.9 L310.7 669.5 Z" fill="none" stroke="#1b1b6b" stroke-width="1" stroke-linejoin="round"/>
<path d="M346.3 625.9 L346.3 648.0 L310.7 688.5" fill="none" stroke="#1b1b6b" stroke-width="1" stroke-linejoin="round"/>
<path d="M300.4 646.5 L329.7 651.3 L329.7 668.0" fill="none" stroke="#1b1b6b" stroke-width="1" stroke-linejoin="round"/>
<path d="M293.0 652.0 L322.0 657.5 L322.0 662.0" fill="none" stroke="#1b1b6b" stroke-width="1" stroke-linejoin="round"/>
<path d="M333.7 673.5 L361.4 679.8 L361.4 698.0 L333.7 692.5 Z" fill="none" stroke="#1b1b6b" stroke-width="1" stroke-linejoin="round"/>
<path d="M333.7 673.5 L340.8 654.5 L365.3 629.1 L396.2 634.7 L361.4 679.8 Z" fill="none" stroke="#1b1b6b" stroke-width="1" stroke-linejoin="round"/>
<path d="M396.2 634.7 L396.2 668.7 L361.4 698.0" fill="none" stroke="#1b1b6b" stroke-width="1" stroke-linejoin="round"/>
<path d="M340.8 654.5 L340.8 672.0 L365.3 629.1 L365.3 652.0" fill="none" stroke="#1b1b6b" stroke-width="1" stroke-linejoin="round"/>
<path d="M348.0 663.0 L383.0 668.5 L383.0 684.0" fill="none" stroke="#1b1b6b" stroke-width="1" stroke-linejoin="round"/>
<path d="M371.0 651.0 L371.0 688.0" fill="none" stroke="#1b1b6b" stroke-width="1" stroke-linejoin="round"/>
<ellipse cx="289.300" cy="667.100" rx="15.800" ry="10.300" fill="none" stroke="#d81e1e" stroke-width="1"/>
<ellipse cx="361.400" cy="683" rx="25" ry="12.700" fill="none" stroke="#d81e1e" stroke-width="1"/>
<path d="M274 667 Q289 651 305 667 M337 683 Q361 662 386 683" fill="none" stroke="#d81e1e" stroke-width="0.900"/>
<g fill="none" stroke="#d81e1e" stroke-width="0.900"><path d="M292.5 632.3 L285.3 646.5 L299.6 646.5 Z M292.5 632.3 L288.9 648.0 M292.5 632.3 L292.5 648.0 M292.5 632.3 L296.0 648.0"/><ellipse cx="292.45000000000005" cy="646.5" rx="7.150000000000006" ry="2.200"/></g>
<g fill="none" stroke="#d81e1e" stroke-width="0.900"><path d="M360.6 649.7 L352.7 664 L367.7 664 Z M360.6 649.7 L356.4 665.5 M360.6 649.7 L360.2 665.5 M360.6 649.7 L363.9 665.5"/><ellipse cx="360.2" cy="664" rx="7.5" ry="2.200"/></g>
<g fill="none" stroke="#d81e1e" stroke-width="0.900"><circle cx="328.1" cy="629.1" r="6.8"/><ellipse cx="328.1" cy="629.1" rx="3.4" ry="6.8"/><ellipse cx="328.1" cy="629.1" rx="6.8" ry="2.72"/><path d="M321.3 629.1 L334.90000000000003 629.1 M328.1 622.3000000000001 L328.1 635.9"/></g>
<g fill="none" stroke="#d81e1e" stroke-width="0.900"><circle cx="370.9" cy="641.8" r="7.6"/><ellipse cx="370.9" cy="641.8" rx="3.8" ry="7.6"/><ellipse cx="370.9" cy="641.8" rx="7.6" ry="3.04"/><path d="M363.29999999999995 641.8 L378.5 641.8 M370.9 634.1999999999999 L370.9 649.4"/></g>
<path d="M287.2 670.9 L289.2 671.8 L293.0 668.8 L288.2 669.0 Z" fill="#3a3a3a" stroke="#101010" stroke-width="1.100"/><path d="M302.3 663.4 L303.9 665.0 L308.7 663.6 L303.9 662.0 Z" fill="#3a3a3a" stroke="#101010" stroke-width="1.100"/><path d="M284.7 670.7 L287.3 672.1 L295.0 670.4 L287.2 669.1 Z" fill="#a6e0b0" stroke="#101010" stroke-width="1.100"/><path d="M300.7 659.3 L303.2 659.9 L308.2 656.2 L302.0 657.2 Z" fill="#a6e0b0" stroke="#101010" stroke-width="1.100"/><path d="M305.6 654.6 L307.0 656.7 L313.1 657.4 L308.0 653.9 Z" fill="#3a3a3a" stroke="#101010" stroke-width="1.100"/><path d="M300.5 673.4 L302.9 674.2 L308.2 670.9 L301.9 671.3 Z" fill="#3a3a3a" stroke="#101010" stroke-width="1.100"/><path d="M306.5 665.1 L308.9 666.7 L316.2 665.5 L309.0 663.7 Z" fill="#3a3a3a" stroke="#101010" stroke-width="1.100"/><path d="M306.9 672.5 L309.7 674.0 L318.3 672.4 L309.7 671.0 Z" fill="#a6e0b0" stroke="#101010" stroke-width="1.100"/><path d="M288.5 673.9 L290.3 674.6 L293.0 671.6 L288.9 671.9 Z" fill="#1a1a1a" stroke="#101010" stroke-width="1.100"/>
<path d="M374.5 691.0 L375.2 692.8 L379.4 692.6 L376.2 689.9 Z" fill="#a6e0b0" stroke="#101010" stroke-width="1.100"/><path d="M367.0 685.4 L369.2 687.1 L376.2 686.2 L369.4 684.1 Z" fill="#a6e0b0" stroke="#101010" stroke-width="1.100"/><path d="M361.8 675.2 L363.7 676.6 L369.5 675.0 L363.7 673.6 Z" fill="#1a1a1a" stroke="#101010" stroke-width="1.100"/><path d="M360.5 680.9 L361.6 682.5 L365.7 681.5 L362.0 679.6 Z" fill="#a6e0b0" stroke="#101010" stroke-width="1.100"/><path d="M354.4 690.6 L356.6 691.1 L360.1 687.3 L355.1 688.5 Z" fill="#a6e0b0" stroke="#101010" stroke-width="1.100"/><path d="M361.1 676.7 L362.1 678.7 L367.2 679.1 L363.1 675.9 Z" fill="#a6e0b0" stroke="#101010" stroke-width="1.100"/><path d="M359.3 679.2 L361.7 680.5 L368.1 678.3 L361.4 677.5 Z" fill="#3a3a3a" stroke="#101010" stroke-width="1.100"/><path d="M369.1 686.7 L371.7 686.9 L376.6 682.4 L370.2 684.3 Z" fill="#1a1a1a" stroke="#101010" stroke-width="1.100"/><path d="M354.3 689.2 L357.3 690.6 L366.0 688.7 L357.2 687.6 Z" fill="#3a3a3a" stroke="#101010" stroke-width="1.100"/><path d="M366.3 681.2 L368.6 682.5 L374.6 680.2 L368.2 679.5 Z" fill="#3a3a3a" stroke="#101010" stroke-width="1.100"/>
<path d="M309.8 640.0 L312.1 641.5 L319.0 640.2 L312.2 638.5 Z" fill="#a6e0b0" stroke="#101010" stroke-width="1.100"/><path d="M315.7 648.0 L318.0 649.4 L324.5 647.4 L317.8 646.4 Z" fill="#a6e0b0" stroke="#101010" stroke-width="1.100"/><path d="M321.9 638.3 L324.2 638.9 L328.5 635.3 L323.0 636.2 Z" fill="#a6e0b0" stroke="#101010" stroke-width="1.100"/><path d="M309.7 631.3 L311.8 631.8 L315.2 628.0 L310.3 629.2 Z" fill="#a6e0b0" stroke="#101010" stroke-width="1.100"/><path d="M316.7 629.4 L319.2 630.1 L324.6 626.6 L318.2 627.3 Z" fill="#1a1a1a" stroke="#101010" stroke-width="1.100"/>
<path d="M366.0 663.7 L368.9 664.2 L375.6 659.8 L367.8 661.4 Z" fill="#a6e0b0" stroke="#101010" stroke-width="1.100"/><path d="M369.4 664.8 L370.5 666.5 L374.7 665.6 L371.0 663.5 Z" fill="#a6e0b0" stroke="#101010" stroke-width="1.100"/><path d="M357.8 655.0 L359.7 656.8 L366.4 656.2 L360.2 653.8 Z" fill="#a6e0b0" stroke="#101010" stroke-width="1.100"/><path d="M356.2 646.9 L358.9 648.7 L367.4 648.2 L359.2 645.8 Z" fill="#3a3a3a" stroke="#101010" stroke-width="1.100"/><path d="M358.6 665.5 L360.3 667.5 L367.2 667.6 L361.1 664.6 Z" fill="#a6e0b0" stroke="#101010" stroke-width="1.100"/><path d="M358.1 671.1 L359.7 673.4 L366.8 674.6 L360.8 670.6 Z" fill="#a6e0b0" stroke="#101010" stroke-width="1.100"/>
<circle cx="316.7" cy="633.4" r="2.2" fill="#151515"/>
<circle cx="284" cy="664.9" r="2" fill="#151515"/>
<circle cx="299.2" cy="664.9" r="2" fill="#151515"/>
<circle cx="369.3" cy="643.9" r="2.4" fill="#151515"/>
<circle cx="365.7" cy="650.9" r="2.2" fill="#151515"/>
<circle cx="356.4" cy="691.7" r="2" fill="#151515"/>
<circle cx="279" cy="671" r="2.2" fill="#151515"/>
<path d="M367 646 L366 676 M369.500 648 L372 672" stroke="#151515" stroke-width="1.300" fill="none"/>
<path d="M297.5 647.5 l4.4 0.7" stroke="#b6f0b6" stroke-width="0.900"/><path d="M286.5 669.1 l1.8 1.4" stroke="#b6f0b6" stroke-width="0.900"/><path d="M302.1 652.0 l1.1 4.4" stroke="#b6f0b6" stroke-width="0.900"/><path d="M287.9 651.2 l-0.6 2.1" stroke="#b6f0b6" stroke-width="0.900"/><path d="M310.1 642.5 l4.5 0.7" stroke="#c9c0f5" stroke-width="0.900"/><path d="M295.9 647.2 l-0.8 3.6" stroke="#c9c0f5" stroke-width="0.900"/><path d="M314.7 645.2 l-1.3 2.8" stroke="#b6f0b6" stroke-width="0.900"/><path d="M308.3 643.1 l-1.3 3.2" stroke="#c9c0f5" stroke-width="0.900"/><path d="M307.5 678.9 l-0.9 3.2" stroke="#f2b0b0" stroke-width="0.900"/><path d="M296.4 679.7 l-1.7 1.4" stroke="#b6f0b6" stroke-width="0.900"/><path d="M296.4 664.8 l-1.9 2.2" stroke="#f2b0b0" stroke-width="0.900"/><path d="M329.0 645.9 l2.6 1.5" stroke="#f2b0b0" stroke-width="0.900"/><path d="M326.8 661.1 l3.6 0.9" stroke="#b6f0b6" stroke-width="0.900"/><path d="M319.9 680.9 l-2.2 3.1" stroke="#f2b0b0" stroke-width="0.900"/><path d="M309.8 662.8 l-3.4 0.6" stroke="#c9c0f5" stroke-width="0.900"/><path d="M313.9 643.0 l2.1 3.1" stroke="#b6f0b6" stroke-width="0.900"/>
<path d="M347.5 697.7 l1.8 1.2" stroke="#c9c0f5" stroke-width="0.900"/><path d="M342.5 688.7 l3.1 2.4" stroke="#b6f0b6" stroke-width="0.900"/><path d="M360.3 667.2 l-1.1 4.6" stroke="#f2b0b0" stroke-width="0.900"/><path d="M357.1 669.1 l-2.1 2.9" stroke="#c9c0f5" stroke-width="0.900"/><path d="M361.1 694.7 l2.6 1.0" stroke="#b6f0b6" stroke-width="0.900"/><path d="M389.5 643.8 l-2.0 1.2" stroke="#b6f0b6" stroke-width="0.900"/><path d="M338.2 654.1 l0.0 3.9" stroke="#c9c0f5" stroke-width="0.900"/><path d="M384.6 674.9 l-1.2 3.4" stroke="#c9c0f5" stroke-width="0.900"/><path d="M337.1 682.1 l-3.7 0.6" stroke="#c9c0f5" stroke-width="0.900"/><path d="M375.1 692.9 l-0.8 4.5" stroke="#f2b0b0" stroke-width="0.900"/><path d="M358.4 649.5 l3.9 1.2" stroke="#b6f0b6" stroke-width="0.900"/><path d="M373.6 697.0 l-0.0 2.6" stroke="#f2b0b0" stroke-width="0.900"/><path d="M343.3 671.7 l-2.1 3.9" stroke="#b6f0b6" stroke-width="0.900"/><path d="M382.1 694.8 l2.1 1.7" stroke="#b6f0b6" stroke-width="0.900"/><path d="M335.7 660.6 l2.7 0.3" stroke="#f2b0b0" stroke-width="0.900"/><path d="M351.4 682.3 l2.7 1.7" stroke="#f2b0b0" stroke-width="0.900"/><path d="M344.1 679.8 l3.5 2.5" stroke="#c9c0f5" stroke-width="0.900"/><path d="M351.5 640.8 l1.2 2.2" stroke="#f2b0b0" stroke-width="0.900"/>
<circle cx="338.700" cy="669.200" r="10.300" fill="none" stroke="#f0f0f0" stroke-width="1.100"/>
<path d="M339.200 648 L339.200 667" stroke="#6f9a3c" stroke-width="1"/>
<circle cx="338.700" cy="669.200" r="2.200" fill="#f0922a"/>
<path d="M270.0 411.82 L275.20000000000005 413.9 L270.0 415.97999999999996 Z" fill="none" stroke="#d2601a" stroke-width="0.900" transform="rotate(65 272.6 413.9)"/>
<path d="M272.9 419.52000000000004 L278.1 421.6 L272.9 423.68 Z" fill="none" stroke="#d2601a" stroke-width="0.900" transform="rotate(65 275.5 421.6)"/>
<path d="M276.4 428.82 L281.6 430.9 L276.4 432.97999999999996 Z" fill="none" stroke="#d2601a" stroke-width="0.900" transform="rotate(65 279 430.9)"/>
<path d="M404.7 415.32 L409.90000000000003 417.4 L404.7 419.47999999999996 Z" fill="none" stroke="#d6248a" stroke-width="0.900" transform="rotate(125 407.3 417.4)"/>
<path d="M399.0 422.62 L404.20000000000005 424.7 L399.0 426.78 Z" fill="none" stroke="#d6248a" stroke-width="0.900" transform="rotate(125 401.6 424.7)"/>
<path d="M395.29999999999995 431.92 L400.5 434 L395.29999999999995 436.08 Z" fill="none" stroke="#d6248a" stroke-width="0.900" transform="rotate(125 397.9 434)"/>
<path d="M264.1 447.1 l3.3 1.9 M265.1 447.9 l1.9 2.0 M267.3 453.4 l1.7 1.6 M257.6 453.9 l2.9 1.1 M273.7 458.0 l2.8 2.2 M258.8 432.4 l2.6 1.1 M259.4 438.5 l1.6 1.9 M263.9 454.7 l2.5 2.3 M265.0 449.9 l2.4 1.6 M274.0 458.9 l3.2 2.4 M261.7 438.2 l2.1 1.1 M269.8 442.8 l3.2 1.8 M273.2 454.9 l1.5 1.4 M272.4 444.7 l3.5 1.8 " stroke="#d2601a" stroke-width="1.100" fill="none"/>
<path d="M416.3 465.6 l2.0 -1.2 M423.8 458.2 l1.7 -1.5 M413.5 465.0 l1.9 -2.1 M421.5 454.9 l1.8 -2.3 M416.0 461.0 l2.0 -2.9 M429.7 445.8 l1.9 -1.8 M432.8 439.7 l3.5 -1.4 M421.1 457.7 l2.1 -1.1 M416.4 461.9 l2.7 -1.7 M426.3 453.2 l2.6 -2.7 M415.8 463.3 l3.1 -1.5 M419.4 463.3 l1.9 -2.9 M433.1 440.8 l1.7 -1.1 M432.6 440.3 l2.0 -2.6 M425.3 447.4 l2.9 -1.1 M419.2 461.7 l2.7 -1.6 M431.5 437.4 l2.0 -1.9 M413.3 463.5 l2.6 -1.3 M424.0 458.7 l2.8 -2.4 M424.1 446.8 l1.5 -2.8 " stroke="#d6248a" stroke-width="1.100" fill="none"/>
<text x="222.8" y="230.5" font-family="Liberation Sans, sans-serif" font-size="7.5" fill="#f4b4b4" text-anchor="middle">X</text>
<path d="M222.8 231.5 L222.6 249" stroke="#f4b4b4" stroke-width="0.900" fill="none"/>
<text x="200" y="254" font-family="Liberation Sans, sans-serif" font-size="7.5" fill="#b6f0b6" text-anchor="middle">Y</text>
<path d="M203.5 251.5 L218 251.5" stroke="#b6f0b6" stroke-width="0.900" fill="none"/>
<text x="484.7" y="215" font-family="Liberation Sans, sans-serif" font-size="7.5" fill="#f4b4b4" text-anchor="middle">X</text>
<path d="M484.7 216 L485.2 235" stroke="#f4b4b4" stroke-width="0.900" fill="none"/>
<text x="514.9" y="238" font-family="Liberation Sans, sans-serif" font-size="7.5" fill="#b6f0b6" text-anchor="middle">Y</text>
<path d="M494 236.5 L510 236" stroke="#b6f0b6" stroke-width="0.900" fill="none"/>
<text x="298" y="230" font-family="Liberation Sans, sans-serif" font-size="6.5" fill="#f4b4b4" text-anchor="middle">X</text>
<text x="397.5" y="226" font-family="Liberation Sans, sans-serif" font-size="6.5" fill="#f4b4b4" text-anchor="middle">X</text>
<text x="420.5" y="243" font-family="Liberation Sans, sans-serif" font-size="6.5" fill="#f4b4b4" text-anchor="middle">X</text>
<text x="425.5" y="248.5" font-family="Liberation Sans, sans-serif" font-size="6.5" fill="#b6f0b6" text-anchor="middle">Y</text>
<path d="M403 250 L418 244.5" stroke="#f4b4b4" stroke-width="0.900" fill="none"/>
<path d="M403 251 L421 248" stroke="#c4bcf4" stroke-width="0.900" fill="none"/>
<path d="M400 252 L406 283" stroke="#b6f0b6" stroke-width="0.900" fill="none"/>
<path d="M294 256 L288 290" stroke="#b6f0b6" stroke-width="0.900" fill="none"/>
<path d="M275 252 L290 252.5" stroke="#c4bcf4" stroke-width="0.900" fill="none"/>
<text x="271.5" y="250.5" font-family="Liberation Sans, sans-serif" font-size="6.5" fill="#f4b4b4" text-anchor="middle">X</text>
<path d="M345 225 L345 236" stroke="#b6f0b6" stroke-width="0.900" fill="none"/>
<path d="M345.5 270 L345.5 285" stroke="#b6f0b6" stroke-width="0.900" fill="none"/>
<path d="M344 333 L344 350" stroke="#b6f0b6" stroke-width="0.900" fill="none"/>
<path d="M343 375 L343 398" stroke="#b6f0b6" stroke-width="0.900" fill="none"/>
<path d="M345.5 285 L358 284" stroke="#f4b4b4" stroke-width="0.900" fill="none"/>
<path d="M344 350 L360 349.5" stroke="#f4b4b4" stroke-width="0.900" fill="none"/>
<path d="M345 326 L359 327.5" stroke="#f4b4b4" stroke-width="0.900" fill="none"/>
<path d="M333 236 L345 236.5" stroke="#c4bcf4" stroke-width="0.900" fill="none"/>
<text x="255.5" y="327.5" font-family="Liberation Sans, sans-serif" font-size="6.5" fill="#f4b4b4" text-anchor="middle">X</text>
<path d="M259 326.5 L280 333" stroke="#f4b4b4" stroke-width="0.900" fill="none"/>
<path d="M280 333 L275.5 352" stroke="#b6f0b6" stroke-width="0.900" fill="none"/>
<text x="441.5" y="324.5" font-family="Liberation Sans, sans-serif" font-size="6.5" fill="#f4b4b4" text-anchor="middle">X</text>
<text x="439.5" y="335" font-family="Liberation Sans, sans-serif" font-size="6.5" fill="#c4bcf4" text-anchor="middle">Z</text>
<path d="M423 331 L436 325.5" stroke="#f4b4b4" stroke-width="0.900" fill="none"/>
<path d="M423 331 L436 334" stroke="#c4bcf4" stroke-width="0.900" fill="none"/>
<path d="M423 331 L423.5 352" stroke="#b6f0b6" stroke-width="0.900" fill="none"/>
<text x="306" y="408" font-family="Liberation Sans, sans-serif" font-size="10" fill="#c4bcf4" text-anchor="middle">Z</text>
<text x="357" y="411" font-family="Liberation Sans, sans-serif" font-size="10" fill="#c4bcf4" text-anchor="middle">Z</text>
<path d="M287 394.5 L315 398.5" stroke="#f4b4b4" stroke-width="0.900" fill="none"/>
<path d="M333 399.5 L365 401.5" stroke="#f4b4b4" stroke-width="0.900" fill="none"/>
<text x="283" y="397.5" font-family="Liberation Sans, sans-serif" font-size="8" fill="#f4b4b4" text-anchor="middle">X</text>
<text x="330" y="403.5" font-family="Liberation Sans, sans-serif" font-size="8.5" fill="#f4b4b4" text-anchor="middle">X</text>
<text x="317.7" y="448" font-family="Liberation Sans, sans-serif" font-size="9" fill="#b6f0b6" text-anchor="middle">Y</text>
<text x="368.6" y="451" font-family="Liberation Sans, sans-serif" font-size="9" fill="#b6f0b6" text-anchor="middle">Y</text>
<text x="276" y="530.5" font-family="Liberation Sans, sans-serif" font-size="7" fill="#f4b4b4" text-anchor="middle">X</text>
<text x="287" y="528.5" font-family="Liberation Sans, sans-serif" font-size="7" fill="#f4b4b4" text-anchor="middle">X</text>
<path d="M291 526 L305 527.5" stroke="#f4b4b4" stroke-width="0.900" fill="none"/>
<path d="M291 528.5 L305 530" stroke="#f4b4b4" stroke-width="0.900" fill="none"/>
<text x="333" y="536" font-family="Liberation Sans, sans-serif" font-size="7" fill="#f4b4b4" text-anchor="middle">X</text>
<path d="M338 533 L356 535" stroke="#f4b4b4" stroke-width="0.900" fill="none"/>
<text x="363" y="585" font-family="Liberation Sans, sans-serif" font-size="7" fill="#b6f0b6" text-anchor="middle">Y</text>
<text x="371" y="583" font-family="Liberation Sans, sans-serif" font-size="7" fill="#b6f0b6" text-anchor="middle">Y</text>
<text x="300" y="547" font-family="Liberation Sans, sans-serif" font-size="9" fill="#c4bcf4" text-anchor="middle">Z</text>
<text x="349" y="554" font-family="Liberation Sans, sans-serif" font-size="9" fill="#c4bcf4" text-anchor="middle">Z</text>
<path d="M349 163 L362 162.5" stroke="#f4b4b4" stroke-width="0.900" fill="none"/>
<text x="365" y="165" font-family="Liberation Sans, sans-serif" font-size="5.5" fill="#f4b4b4" text-anchor="middle">X</text>
<text x="340.5" y="165" font-family="Liberation Sans, sans-serif" font-size="6" fill="#c4bcf4" text-anchor="middle">Z</text>
<path d="M665.300 0 H818 V21.400 H669.300 Q665.300 21.400 665.300 17.400 Z" fill="#4c4c4c" fill-opacity="0.960"/>
<g fill="none" stroke="#d8d8d8" stroke-width="0.900"><path d="M681.300 4 Q676 2.600 675.700 6.500 Q676 9.500 680 9.800 Q677 11 677.200 13.500 Q677.800 16 681.300 14.800" stroke-dasharray="1.600 0.800"/><path d="M685.100 4 Q690.400 2.600 690.700 6.500 Q690.400 9.500 686.400 9.800 Q689.400 11 689.200 13.500 Q688.600 16 685.100 14.800 Z"/><path d="M683.200 2.500 V16.500" stroke-dasharray="1.600 1.100" stroke="#f0f0f0"/></g>
<path d="M693.700 0 H710 V15 Q710 18 707 18 H696.700 Q693.700 18 693.700 15 Z" fill="#5a5a5a" stroke="#454545" stroke-width="0.800"/>
<text x="701.900" y="13.200" font-family="Liberation Sans, sans-serif" font-size="11.800" fill="#e6e6e6" text-anchor="middle">X</text>
<path d="M716.500 0 H811.600 V15 Q811.600 18 808.600 18 H719.500 Q716.500 18 716.500 15 Z" fill="#2a2a2a"/>
<text x="724.400" y="13.200" font-family="Liberation Sans, sans-serif" font-size="11.800" fill="#e6e6e6">Pose Options</text>
<path d="M801.800 7.500 L805.300 11 L808.800 7.500" fill="none" stroke="#e0e0e0" stroke-width="1.200"/>
<path d="M818 37.400 H813.500 Q810 37.400 810 41 V46.800 Q810 50.300 813.500 50.300 H818 Z" fill="#7a7a7a" fill-opacity="0.550"/>
<path d="M816.500 41 L813.300 43.900 L816.500 46.800" fill="none" stroke="#bdbdbd" stroke-width="1.100"/>
<path d="M790.400 819 V816.500 Q790.400 813 794 813 H800.500 Q804 813 804 816.500 V819 Z" fill="#7a7a7a"/>
<path d="M794 819 L797.200 815.800 L800.400 819" fill="none" stroke="#d8d8d8" stroke-width="1.100"/>
<circle cx="740.300" cy="71" r="7.300" fill="#c88a92" fill-opacity="0.450" stroke="#e8556e" stroke-width="1.100" stroke-opacity="0.800"/>
<circle cx="751.300" cy="73.200" r="7.800" fill="#93b066" fill-opacity="0.800" stroke="#8fd422" stroke-width="1.400"/>
<circle cx="768" cy="103.900" r="7.500" fill="#7f9fc9" fill-opacity="0.850" stroke="#4a96e8" stroke-width="1.200"/>
<circle cx="784.500" cy="70.300" r="7.600" fill="#86b83c"/>
<text x="784" y="75" font-family="Liberation Sans, sans-serif" font-size="11.500" font-weight="bold" fill="#222" text-anchor="middle">Y</text>
<path d="M767.500 48 V72" stroke="#4a96e8" stroke-width="2.200"/>
<path d="M766.500 71.900 L788 72.500" stroke="#ee3d55" stroke-width="2.200"/>
<circle cx="795.200" cy="72.700" r="8.200" fill="#ee3d55"/>
<text x="795.200" y="77" font-family="Liberation Sans, sans-serif" font-size="12" fill="#1a1a1a" text-anchor="middle">X</text>
<circle cx="768" cy="39.800" r="8" fill="#4a96e8"/>
<text x="768" y="44.100" font-family="Liberation Sans, sans-serif" font-size="12" fill="#10203a" text-anchor="middle">Z</text>
<circle cx="796" cy="126.4" r="13.500" fill="#6a6a6a" fill-opacity="0.800"/>
<circle cx="796" cy="156.4" r="13.500" fill="#6a6a6a" fill-opacity="0.800"/>
<circle cx="796" cy="186.8" r="13.500" fill="#6a6a6a" fill-opacity="0.800"/>
<circle cx="796" cy="216.5" r="13.500" fill="#6a6a6a" fill-opacity="0.800"/>
<circle cx="797.600" cy="125" r="6.300" fill="#e2e2e2"/><path d="M793 129.800 L789 133.800" stroke="#e2e2e2" stroke-width="2.200" stroke-linecap="round"/><path d="M794.600 125 H800.600 M797.600 122 V128" stroke="#6e6e6e" stroke-width="1.100"/>
<g stroke="#e2e2e2" stroke-width="2.300" stroke-linecap="round" fill="none"><path d="M793.300 158.500 L792.300 152.600 M796.100 157.500 L795.700 150.500 M798.900 157.500 L799.300 150.900 M801.500 159 L802.700 153.600 M792.800 162.300 L789.200 158.500"/></g><path d="M792 157 L802.700 157.500 Q803 161.500 800.500 163.800 Q797.500 165.800 794.500 164.300 Q792.500 163 791.300 160.500 Z" fill="#e2e2e2"/>
<g fill="none" stroke="#e2e2e2" stroke-width="1.100"><path d="M790 181 a3 3 0 0 1 5.500 -1.500 a3.400 3.400 0 0 1 6.500 1.800 a3.400 3.400 0 0 1 -3.400 3 h-6 a3 3 0 0 1 -2.600 -3.300z"/><circle cx="792.800" cy="181.300" r="0.600"/><circle cx="798.800" cy="181" r="1.100"/><rect x="791.500" y="188.200" width="7" height="5.500" rx="0.800"/><path d="M789.500 190 h2 M802 189 v4 l-2.800 -2 z"/></g>
<g fill="none" stroke="#e2e2e2" stroke-width="1.100"><path d="M791.500 210.500 H800.500 L803.500 223 H788.500 Z M794.500 210.500 L793.500 223 M797.500 210.500 L798.500 223 M790.600 214.300 H801.400 M789.600 218.300 H802.400"/></g>
<!--/SCENE-->
</svg>
</div>
<!--OUTLINER-->
<div id="outlbg"><i style="top:23px"></i><i style="top:63px"></i></div>
<div id="outl">
<div class="orow alt" style="top:23px"></div>
<div class="orow alt" style="top:63px"></div>
<!-- scene collection -->
<div class="abs" style="left:19.500px;top:-2px;width:19.500px;height:23.500px;border:1px solid #686868;border-radius:4.500px;background:#484848"></div>
<svg class="abs" style="left:22px;top:4.200px" width="15" height="15.500" viewBox="0 0 15 15" preserveAspectRatio="none"><use href="#i-coll" fill="#e0e0e0"/></svg>
<div class="t" style="left:43px;top:7px;color:#e6e6e6">Scene Collection</div>
<!-- Avatar -->
<svg class="abs" style="left:26px;top:28px" width="8" height="12" viewBox="0 0 8 12"><path d="M1.5 1.5 L6 6 L1.5 10.500" fill="none" stroke="#c8c8c8" stroke-width="1.2"/></svg>
<svg class="abs" style="left:42px;top:25px" width="15" height="15.500" viewBox="0 0 15 15" preserveAspectRatio="none"><use href="#i-coll" fill="#e0e0e0"/></svg>
<div class="t" style="left:63px;top:27px;color:#e6e6e6">Avatar</div>
<svg class="abs" style="left:119px;top:26px" width="16" height="15" viewBox="0 0 16 15"><use href="#i-mesh" stroke="#e09350"/></svg>
<div class="t" style="left:127px;top:32px;font-size:9.500px;line-height:10px;color:#e6e6e6;text-shadow:0 0 1px #000,0 0 1px #000">32</div>
<div class="abs" style="left:137px;top:24px;width:20px;height:18.500px;border:1px solid #6a6a6a;border-radius:4.500px;background:#505050"></div>
<svg class="abs" style="left:139.500px;top:25.500px" width="15" height="15" viewBox="0 0 15 15"><use href="#i-arm" fill="#e09350" color="#e09350"/></svg>
<svg class="abs" style="left:160px;top:26px" width="15" height="15" viewBox="0 0 15 15"><use href="#i-coll" fill="#e0e0e0"/></svg>
<div class="t" style="left:173px;top:32px;font-size:9.500px;line-height:10px;color:#e6e6e6;text-shadow:0 0 1px #000,0 0 1px #000">2</div>
<!-- Prop -->
<svg class="abs" style="left:26px;top:48px" width="8" height="12" viewBox="0 0 8 12"><path d="M1.5 1.5 L6 6 L1.5 10.5" fill="none" stroke="#8a8a8a" stroke-width="1.2"/></svg>
<svg class="abs" style="left:42px;top:45px" width="15" height="15.500" viewBox="0 0 15 15" preserveAspectRatio="none"><use href="#i-coll" fill="#8a8a8a"/></svg>
<div class="t" style="left:63px;top:47px;color:#8c8c8c">Prop</div>
<svg class="abs" style="left:111px;top:46px" width="15" height="15" viewBox="0 0 15 15"><use href="#i-arm" fill="#99673d" color="#99673d"/></svg>
<!-- Animation_Area_Reference -->
<svg class="abs" style="left:26px;top:68px" width="8" height="12" viewBox="0 0 8 12"><path d="M1.5 1.5 L6 6 L1.5 10.5" fill="none" stroke="#8a8a8a" stroke-width="1.2"/></svg>
<svg class="abs" style="left:42px;top:65px" width="15" height="15.500" viewBox="0 0 15 15" preserveAspectRatio="none"><use href="#i-coll" fill="#8a8a8a"/></svg>
<div class="t" style="left:63px;top:67px;color:#8c8c8c;letter-spacing:-0.150px">Animation_Area_Reference</div>
<svg class="abs" style="left:226px;top:66px" width="16" height="15" viewBox="0 0 16 15"><use href="#i-mesh" stroke="#b57a3c"/></svg>
<div class="t" style="left:240px;top:72px;font-size:9.500px;line-height:10px;color:#e6e6e6;text-shadow:0 0 1px #000,0 0 1px #000">2</div>
<!-- right toggles -->
<div class="abs" style="left:316px;top:28px;width:10px;height:10px;background:#e6e6e6;border-radius:1.5px"></div><svg class="abs" style="left:316px;top:28px" width="10" height="10" viewBox="0 0 10 10"><path d="M2 5 L4.2 7.2 L8.2 2.600" fill="none" stroke="#222" stroke-width="1.7"/></svg><svg class="abs" style="left:334.500px;top:25.600px" width="14" height="14" viewBox="0 0 14 14"><use href="#i-eye" /></svg><svg class="abs" style="left:354px;top:25px" width="15" height="14" viewBox="0 0 15 14"><use href="#i-cam"/></svg>
<div class="abs" style="left:316px;top:48px;width:10px;height:10px;background:#e6e6e6;border-radius:1.5px"></div><svg class="abs" style="left:316px;top:48px" width="10" height="10" viewBox="0 0 10 10"><path d="M2 5 L4.2 7.2 L8.2 2.600" fill="none" stroke="#222" stroke-width="1.7"/></svg><svg class="abs" style="left:334px;top:46px" width="14" height="14" viewBox="0 0 14 14"><path d="M1 6.500 Q7 13 13 6.500" fill="none" stroke="#4a4a4a" stroke-width="1"/></svg><svg class="abs" style="left:354px;top:45px" width="15" height="14" viewBox="0 0 15 14"><use href="#i-cam"/></svg>
<div class="abs" style="left:316px;top:68px;width:10px;height:10px;background:#e6e6e6;border-radius:1.5px"></div><svg class="abs" style="left:316px;top:68px" width="10" height="10" viewBox="0 0 10 10"><path d="M2 5 L4.2 7.2 L8.2 2.600" fill="none" stroke="#222" stroke-width="1.7"/></svg><svg class="abs" style="left:334px;top:66px" width="14" height="14" viewBox="0 0 14 14"><path d="M1 6.500 Q7 13 13 6.500" fill="none" stroke="#4a4a4a" stroke-width="1"/></svg><svg class="abs" style="left:354px;top:65px" width="15" height="14" viewBox="0 0 15 14"><use href="#i-cam"/></svg>

</div>
<!--PROPS-->
<div id="propsbg"><div></div></div>
<div id="props">
<div id="tabs"></div>
<div id="sbar" class="abs" style="left:375px;top:98px;width:12px;height:700px;background:#424242;border-radius:3px"></div>
<div class="abs" style="left:6.800px;top:2.500px;width:32.200px;height:19.500px;background:#282828;border:1px solid #3d3d3d;border-radius:4.500px"></div>
<svg class="abs" style="left:11.500px;top:4.600px" width="16" height="15" viewBox="0 0 16 15"><path d="M3.500 0.200h7.600a3.050 3.050 0 0 1 0 6.100h-7.600a3.050 3.050 0 0 1 0-6.100z M3.500 8.200h7.600a3.050 3.050 0 0 1 0 6.100h-7.600a3.050 3.050 0 0 1 0-6.100z" fill="#e6e6e6"/><path d="M6.800 1.500h4.300a1.750 1.750 0 0 1 0 3.500h-4.300z M9.300 9.500h1.800a1.750 1.750 0 0 1 0 3.500h-1.800z" fill="#282828"/></svg>
<svg class="abs" style="left:28.500px;top:10.200px" width="8" height="6" viewBox="0 0 8 6"><path d="M1 1 L4 4.300 L7 1" fill="none" stroke="#e0e0e0" stroke-width="1.200"/></svg>
<div class="abs" style="left:131px;top:2px;width:119px;height:20px;background:#1d1d1d;border:1px solid #3d3d3d;border-radius:4px"></div>
<svg class="abs" style="left:135px;top:4px" width="16" height="16" viewBox="0 0 16 16"><circle cx="9.500" cy="6.500" r="4.500" fill="none" stroke="#d0d0d0" stroke-width="1.300"/><path d="M6.300 9.700 L1.500 14.500" stroke="#d0d0d0" stroke-width="1.600" stroke-linecap="round"/></svg>
<div class="t" style="left:157px;top:5px;color:#7c7c7c">Search</div>
<div class="abs" style="left:353px;top:2.500px;width:19.500px;height:19.500px;background:#282828;border:1px solid #3d3d3d;border-radius:4.500px"></div>
<svg class="abs" style="left:359px;top:9px" width="9" height="7" viewBox="0 0 9 7"><path d="M1 1.200 L4.500 4.800 L8 1.200" fill="none" stroke="#e6e6e6" stroke-width="1.300"/></svg>
<div class="panel" style="top:25px;height:54.600px;border-radius:0 0 4px 4px"></div>
<svg class="abs" style="left:43px;top:28.8px" width="11" height="7" viewBox="0 0 11 7"><path d="M1 1 L5.500 5.500 L10 1" fill="none" stroke="#d0d0d0" stroke-width="1.100"/></svg>
<div class="t" style="left:57.5px;top:25px;color:#e6e6e6;text-shadow:0 1px 1px rgba(0,0,0,0.400)">Pose</div>
<svg class="abs" style="left:355px;top:29px" width="11" height="6" viewBox="0 0 11 6"><rect x="0" y="0" width="1.400" height="1" fill="#777"/><rect x="0" y="1" width="1.400" height="1.200" fill="#0e0e0e"/><rect x="0" y="3" width="1.400" height="1" fill="#777"/><rect x="0" y="4" width="1.400" height="1.200" fill="#0e0e0e"/><rect x="3" y="0" width="1.400" height="1" fill="#777"/><rect x="3" y="1" width="1.400" height="1.200" fill="#0e0e0e"/><rect x="3" y="3" width="1.400" height="1" fill="#777"/><rect x="3" y="4" width="1.400" height="1.200" fill="#0e0e0e"/><rect x="6" y="0" width="1.400" height="1" fill="#777"/><rect x="6" y="1" width="1.400" height="1.200" fill="#0e0e0e"/><rect x="6" y="3" width="1.400" height="1" fill="#777"/><rect x="6" y="4" width="1.400" height="1.200" fill="#0e0e0e"/><rect x="9" y="0" width="1.400" height="1" fill="#777"/><rect x="9" y="1" width="1.400" height="1.200" fill="#0e0e0e"/><rect x="9" y="3" width="1.400" height="1" fill="#777"/><rect x="9" y="4" width="1.400" height="1.200" fill="#0e0e0e"/></svg>
<div class="btn sel" style="left:44px;top:53px;width:158px;border-radius:3px 0 0 3px">Pose Position</div>
<div class="btn" style="left:203px;top:53px;width:160px;border-radius:0 3px 3px 0">Rest Position</div>
<div class="panel" style="top:82px;height:374.500px"></div>
<svg class="abs" style="left:43px;top:91.8px" width="11" height="7" viewBox="0 0 11 7"><path d="M1 1 L5.500 5.500 L10 1" fill="none" stroke="#d0d0d0" stroke-width="1.100"/></svg>
<div class="t" style="left:57.5px;top:88px;color:#e6e6e6;text-shadow:0 1px 1px rgba(0,0,0,0.400)">Bone Collections</div>
<svg class="abs" style="left:355px;top:92px" width="11" height="6" viewBox="0 0 11 6"><rect x="0" y="0" width="1.400" height="1" fill="#777"/><rect x="0" y="1" width="1.400" height="1.200" fill="#0e0e0e"/><rect x="0" y="3" width="1.400" height="1" fill="#777"/><rect x="0" y="4" width="1.400" height="1.200" fill="#0e0e0e"/><rect x="3" y="0" width="1.400" height="1" fill="#777"/><rect x="3" y="1" width="1.400" height="1.200" fill="#0e0e0e"/><rect x="3" y="3" width="1.400" height="1" fill="#777"/><rect x="3" y="4" width="1.400" height="1.200" fill="#0e0e0e"/><rect x="6" y="0" width="1.400" height="1" fill="#777"/><rect x="6" y="1" width="1.400" height="1.200" fill="#0e0e0e"/><rect x="6" y="3" width="1.400" height="1" fill="#777"/><rect x="6" y="4" width="1.400" height="1.200" fill="#0e0e0e"/><rect x="9" y="0" width="1.400" height="1" fill="#777"/><rect x="9" y="1" width="1.400" height="1.200" fill="#0e0e0e"/><rect x="9" y="3" width="1.400" height="1" fill="#777"/><rect x="9" y="4" width="1.400" height="1.200" fill="#0e0e0e"/></svg>
<div class="abs" style="left:44px;top:116px;width:291px;height:282px;background:#2b2b2b;border-radius:4px;box-shadow:0 1px 1px rgba(0,0,0,0.180)"></div>
<div class="t" style="left:68px;top:124px;color:#e6e6e6;">Global/Switch</div>
<div class="abs" style="left:265.5px;top:128.5px;width:6.400px;height:6.400px;border-radius:3.200px;background:#e6e6e6;margin:-0.700px 0 0 -0.700px"></div>
<svg class="abs" style="left:280.9px;top:123.5px" width="14" height="14" viewBox="0 0 14 14"><use href="#i-eye"/></svg>
<svg class="abs" style="left:301.1px;top:124.2px" width="13.200" height="13.200" viewBox="0 0 14 14"><use href="#i-star"/></svg>
<div class="abs" style="left:49px;top:144px;width:273px;height:18px;background:#4772b3;border-radius:3px"></div>
<div class="t" style="left:68px;top:146px;color:#ffffff;">FK Upper</div>
<svg class="abs" style="left:280.9px;top:145.5px" width="14" height="14" viewBox="0 0 14 14"><use href="#i-eye"/></svg>
<svg class="abs" style="left:301.1px;top:146.2px" width="13.200" height="13.200" viewBox="0 0 14 14"><use href="#i-star"/></svg>
<div class="t" style="left:68px;top:168px;color:#e6e6e6;">FK Lower</div>
<svg class="abs" style="left:280.9px;top:167.5px" width="14" height="14" viewBox="0 0 14 14"><use href="#i-eye"/></svg>
<svg class="abs" style="left:301.1px;top:168.2px" width="13.200" height="13.200" viewBox="0 0 14 14"><use href="#i-star"/></svg>
<div class="t" style="left:68px;top:190px;color:#e6e6e6;">IK Upper</div>
<svg class="abs" style="left:280.9px;top:189.5px" width="14" height="14" viewBox="0 0 14 14"><use href="#i-eye"/></svg>
<svg class="abs" style="left:301.1px;top:190.2px" width="13.200" height="13.200" viewBox="0 0 14 14"><use href="#i-star"/></svg>
<div class="t" style="left:68px;top:212px;color:#e6e6e6;">IK Lower</div>
<svg class="abs" style="left:280.9px;top:211.5px" width="14" height="14" viewBox="0 0 14 14"><use href="#i-eye"/></svg>
<svg class="abs" style="left:301.1px;top:212.2px" width="13.200" height="13.200" viewBox="0 0 14 14"><use href="#i-star"/></svg>
<div class="t" style="left:68px;top:234px;color:#e6e6e6;">Fingers</div>
<svg class="abs" style="left:280.9px;top:233.5px" width="14" height="14" viewBox="0 0 14 14"><use href="#i-eye"/></svg>
<svg class="abs" style="left:301.1px;top:234.2px" width="13.200" height="13.200" viewBox="0 0 14 14"><use href="#i-star"/></svg>
<div class="t" style="left:68px;top:256px;color:#e6e6e6;">Deformation Bones</div>
<svg class="abs" style="left:281px;top:256px" width="14" height="14" viewBox="0 0 14 14"><path d="M1 6 Q7 12.500 13 6" fill="none" stroke="#9a9a9a" stroke-width="1"/></svg>
<svg class="abs" style="left:301.1px;top:256.2px" width="13.200" height="13.200" viewBox="0 0 14 14"><use href="#i-star"/></svg>
<div class="t" style="left:68px;top:278px;color:#e6e6e6;letter-spacing:-0.090px">DON'T TOUCH (head rotation)</div>
<svg class="abs" style="left:280.9px;top:277.5px" width="14" height="14" viewBox="0 0 14 14"><use href="#i-eye"/></svg>
<svg class="abs" style="left:301.1px;top:278.2px" width="13.200" height="13.200" viewBox="0 0 14 14"><use href="#i-star"/></svg>
<div class="t" style="left:68px;top:300px;color:#e6e6e6;">DON'T TOUCH (shoulder rotation)</div>
<svg class="abs" style="left:280.9px;top:299.5px" width="14" height="14" viewBox="0 0 14 14"><use href="#i-eye"/></svg>
<svg class="abs" style="left:301.1px;top:300.2px" width="13.200" height="13.200" viewBox="0 0 14 14"><use href="#i-star"/></svg>
<div class="t" style="left:68px;top:322px;color:#e6e6e6;letter-spacing:-0.190px">DON'T TOUCH (IK Setup)</div>
<svg class="abs" style="left:280.9px;top:321.5px" width="14" height="14" viewBox="0 0 14 14"><use href="#i-eye"/></svg>
<svg class="abs" style="left:301.1px;top:322.2px" width="13.200" height="13.200" viewBox="0 0 14 14"><use href="#i-star"/></svg>
<svg class="abs" style="left:185px;top:386.5px" width="11" height="5" viewBox="0 0 11 5"><rect x="0" y="0" width="1.300" height="1.300" fill="#bbb"/><rect x="0" y="3" width="1.300" height="1.300" fill="#bbb"/><rect x="3" y="0" width="1.300" height="1.300" fill="#bbb"/><rect x="3" y="3" width="1.300" height="1.300" fill="#bbb"/><rect x="6" y="0" width="1.300" height="1.300" fill="#bbb"/><rect x="6" y="3" width="1.300" height="1.300" fill="#bbb"/><rect x="9" y="0" width="1.300" height="1.300" fill="#bbb"/><rect x="9" y="3" width="1.300" height="1.300" fill="#bbb"/></svg>
<div class="btn" style="left:345px;top:116px;width:18px;height:18px;border-radius:3px 3px 0 0"></div>
<div class="btn" style="left:345px;top:135px;width:18px;height:19px;border-radius:0 0 3px 3px"></div>
<svg class="abs" style="left:345px;top:116px" width="18" height="37" viewBox="0 0 18 37"><path d="M4.300 8.700h9.400M9 4v9.400M4.300 27.400h9.400" stroke="#e6e6e6" stroke-width="1.300" fill="none"/></svg>
<div class="abs" style="left:345px;top:162px;width:18px;height:18px;background:#222222;border-radius:3px;box-shadow:0 1px 1px rgba(0,0,0,0.200)"></div>
<svg class="abs" style="left:349.5px;top:168px" width="9" height="7" viewBox="0 0 9 7"><path d="M0.800 1 L4.500 4.800 L8.200 1" fill="none" stroke="#e6e6e6" stroke-width="1.200"/></svg>
<div class="btn" style="left:345px;top:188px;width:18px;height:18px;border-radius:3px 3px 0 0"></div>
<div class="btn" style="left:345px;top:207px;width:18px;height:19px;border-radius:0 0 3px 3px"></div>
<svg class="abs" style="left:345px;top:188px" width="18" height="37" viewBox="0 0 18 37"><path d="M9 6 L13 12 L5 12 Z M9 31 L13 25 L5 25 Z" fill="#e6e6e6"/></svg>
<div class="btn" style="left:44px;top:405px;width:76px;border-radius:3px 0 0 3px">Assign</div>
<div class="btn" style="left:121px;top:405px;width:77px;border-radius:0 3px 3px 0">Remove</div>
<div class="btn" style="left:208px;top:405px;width:76px;border-radius:3px 0 0 3px">Select</div>
<div class="btn" style="left:285px;top:405px;width:78px;border-radius:0 3px 3px 0">Deselect</div>
<svg class="abs" style="left:59px;top:439px" width="7" height="11" viewBox="0 0 7 11"><path d="M1 1 L5.500 5.500 L1 10" fill="none" stroke="#d0d0d0" stroke-width="1.100"/></svg>
<div class="t" style="left:71.29999999999995px;top:437.5px;color:#e6e6e6;text-shadow:0 1px 1px rgba(0,0,0,0.400)">Custom Properties</div>
<div class="panel" style="top:459px;height:24.400px"></div>
<svg class="abs" style="left:45px;top:466px" width="7" height="11" viewBox="0 0 7 11"><path d="M1 1 L5.500 5.500 L1 10" fill="none" stroke="#d0d0d0" stroke-width="1.100"/></svg>
<div class="t" style="left:57.5px;top:465px;color:#e6e6e6;text-shadow:0 1px 1px rgba(0,0,0,0.400)">Motion Paths</div>
<svg class="abs" style="left:355px;top:469px" width="11" height="6" viewBox="0 0 11 6"><rect x="0" y="0" width="1.400" height="1" fill="#777"/><rect x="0" y="1" width="1.400" height="1.200" fill="#0e0e0e"/><rect x="0" y="3" width="1.400" height="1" fill="#777"/><rect x="0" y="4" width="1.400" height="1.200" fill="#0e0e0e"/><rect x="3" y="0" width="1.400" height="1" fill="#777"/><rect x="3" y="1" width="1.400" height="1.200" fill="#0e0e0e"/><rect x="3" y="3" width="1.400" height="1" fill="#777"/><rect x="3" y="4" width="1.400" height="1.200" fill="#0e0e0e"/><rect x="6" y="0" width="1.400" height="1" fill="#777"/><rect x="6" y="1" width="1.400" height="1.200" fill="#0e0e0e"/><rect x="6" y="3" width="1.400" height="1" fill="#777"/><rect x="6" y="4" width="1.400" height="1.200" fill="#0e0e0e"/><rect x="9" y="0" width="1.400" height="1" fill="#777"/><rect x="9" y="1" width="1.400" height="1.200" fill="#0e0e0e"/><rect x="9" y="3" width="1.400" height="1" fill="#777"/><rect x="9" y="4" width="1.400" height="1.200" fill="#0e0e0e"/></svg>
<div class="panel" style="top:486px;height:220px"></div>
<svg class="abs" style="left:43px;top:495.8px" width="11" height="7" viewBox="0 0 11 7"><path d="M1 1 L5.500 5.500 L10 1" fill="none" stroke="#d0d0d0" stroke-width="1.100"/></svg>
<div class="t" style="left:57.5px;top:492px;color:#e6e6e6;text-shadow:0 1px 1px rgba(0,0,0,0.400)">Viewport Display</div>
<svg class="abs" style="left:355px;top:496px" width="11" height="6" viewBox="0 0 11 6"><rect x="0" y="0" width="1.400" height="1" fill="#777"/><rect x="0" y="1" width="1.400" height="1.200" fill="#0e0e0e"/><rect x="0" y="3" width="1.400" height="1" fill="#777"/><rect x="0" y="4" width="1.400" height="1.200" fill="#0e0e0e"/><rect x="3" y="0" width="1.400" height="1" fill="#777"/><rect x="3" y="1" width="1.400" height="1.200" fill="#0e0e0e"/><rect x="3" y="3" width="1.400" height="1" fill="#777"/><rect x="3" y="4" width="1.400" height="1.200" fill="#0e0e0e"/><rect x="6" y="0" width="1.400" height="1" fill="#777"/><rect x="6" y="1" width="1.400" height="1.200" fill="#0e0e0e"/><rect x="6" y="3" width="1.400" height="1" fill="#777"/><rect x="6" y="4" width="1.400" height="1.200" fill="#0e0e0e"/><rect x="9" y="0" width="1.400" height="1" fill="#777"/><rect x="9" y="1" width="1.400" height="1.200" fill="#0e0e0e"/><rect x="9" y="3" width="1.400" height="1" fill="#777"/><rect x="9" y="4" width="1.400" height="1.200" fill="#0e0e0e"/></svg>
<div class="lbl" style="right:224px;top:522px">Display As</div>
<div class="abs" style="left:169px;top:520px;width:174px;height:18px;background:#282828;border-radius:3px;box-shadow:0 1px 1px rgba(0,0,0,0.200)"></div>
<div class="t" style="left:176px;top:522px;color:#e6e6e6;">Octahedral</div>
<svg class="abs" style="left:332.5px;top:526.5px" width="9" height="7" viewBox="0 0 9 7"><path d="M1 1 L4.500 4.600 L8 1" fill="none" stroke="#e6e6e6" stroke-width="1.200"/></svg>
<div class="dot" style="left:352px;top:527px"></div>
<div class="lbl" style="right:224px;top:547px">Show</div>
<div class="cb" style="left:169px;top:548px"></div>
<div class="t" style="left:185px;top:547px;color:#e6e6e6;">Names</div>
<div class="dot" style="left:352px;top:552px"></div>
<div class="cb on" style="left:169px;top:570px"></div><svg class="abs" style="left:169px;top:570px" width="12" height="12" viewBox="0 0 12 12"><path d="M2.600 6.200 L5 8.700 L9.600 3.200" fill="none" stroke="#fff" stroke-width="1.600"/></svg>
<div class="t" style="left:185px;top:569px;color:#e6e6e6;">Shapes</div>
<div class="dot" style="left:352px;top:574px"></div>
<div class="cb on" style="left:169px;top:592px"></div><svg class="abs" style="left:169px;top:592px" width="12" height="12" viewBox="0 0 12 12"><path d="M2.600 6.200 L5 8.700 L9.600 3.200" fill="none" stroke="#fff" stroke-width="1.600"/></svg>
<div class="t" style="left:185px;top:591px;color:#e6e6e6;">Bone Colors</div>
<div class="dot" style="left:352px;top:596px"></div>
<div class="cb on" style="left:169px;top:614px"></div><svg class="abs" style="left:169px;top:614px" width="12" height="12" viewBox="0 0 12 12"><path d="M2.600 6.200 L5 8.700 L9.600 3.200" fill="none" stroke="#fff" stroke-width="1.600"/></svg>
<div class="t" style="left:185px;top:613px;color:#e6e6e6;">In Front</div>
<div class="dot" style="left:352px;top:618px"></div>
<div class="lbl" style="right:224px;top:638px">Axes</div>
<div class="cb on" style="left:169px;top:639px"></div><svg class="abs" style="left:169px;top:639px" width="12" height="12" viewBox="0 0 12 12"><path d="M2.600 6.200 L5 8.700 L9.600 3.200" fill="none" stroke="#fff" stroke-width="1.600"/></svg>
<div class="btn" style="left:189px;top:636px;width:154px;border-radius:3px"></div>
<div class="t" style="left:204px;top:638px;color:#e6e6e6;">Position</div>
<div class="lbl" style="right:53px;top:638px">0.0</div>
<div class="dot" style="left:352px;top:643px"></div>
<div class="lbl" style="right:224px;top:660px">Relations</div>
<div class="btn sel" style="left:169px;top:658px;width:86px;border-radius:3px 0 0 3px">Tail</div>
<div class="btn" style="left:256px;top:658px;width:87px;border-radius:0 3px 3px 0">Head</div>
<div class="dot" style="left:352px;top:665px"></div>
<div class="abs" style="left:0;top:25px;width:27px;height:36px;background:#202020"></div>
<div class="abs" style="left:3px;top:61px;width:24px;height:1px;background:#262626"></div>
<div class="abs" style="left:3px;top:209px;width:24px;height:1px;background:#262626"></div>
<div class="abs" style="left:3px;top:385px;width:24px;height:1px;background:#262626"></div>
<div class="abs" style="left:1px;top:302px;width:26px;height:26px;background:#2d2d2d;border-radius:4px 0 0 4px"></div>
<svg class="abs" style="left:6px;top:39px" width="16" height="16" viewBox="0 0 16 16"><path d="M3.400 1.300V8" stroke="#b4b4b4" stroke-width="1.100" fill="none"/><path d="M1.500 8.500h3.800v1.500a2.600 2.600 0 0 1-0.600 4.300a2.600 2.600 0 0 1-2.600 0a2.600 2.600 0 0 1-0.600-4.300z" fill="#b4b4b4"/><path d="M8.500 1.200C7.900 4 8.600 6.300 10.400 7.200V13.800a1.400 1.400 0 0 0 2.800 0V7.200C15 6.300 15.700 4 15.100 1.200L13.300 1.200V4.700H10.300V1.200Z" fill="#b4b4b4"/><circle cx="11.800" cy="13.400" r="0.600" fill="#202020"/></svg>
<svg class="abs" style="left:6px;top:75px" width="16" height="16" viewBox="0 0 16 16"><path d="M1 4h3.200l0.800-2h4l0.800 2h5.200v10.500h-14z M12 2.200h2v0.900h-2z" fill="#b4b4b4"/><path d="M2.700 6.300h7.300v1.100h-7.300zM2.700 8.500h7.300v1.100h-7.300zM2.700 10.700h7.300v1.100h-7.300zM11.600 6.300h2v2h-2zM11.600 10.400h2v2h-2z" fill="#1d1d1d"/></svg>
<svg class="abs" style="left:6px;top:103px" width="16" height="16" viewBox="0 0 16 16"><path d="M2.500 0.800h11a1.500 1.500 0 0 1 1.500 1.500v6.200h-2.200v-4h-9.600v4h-2.200v-6.200a1.500 1.500 0 0 1 1.500-1.500z" fill="#b4b4b4"/><path d="M4.300 5.600h7.400v10h-7.400z" fill="#8a8a8a"/><path d="M5.200 13.800l2.600-3.600l2.600 3.600zM9.700 7h1.300v1.300h-1.300z" fill="#2a2a2a"/></svg>
<svg class="abs" style="left:6px;top:131px" width="16" height="16" viewBox="0 0 16 16"><path d="M5 1h10v10h-10z M6 2v8h8v-8z" fill="#b4b4b4" fill-rule="evenodd"/><path d="M6 10l2.700-5.500l1.800 3l1.200-1.500l2.300 4z M12.300 3h1.200v1.200h-1.200z" fill="#b4b4b4"/><path d="M3.400 3.500v9.200h9.200 M1.500 5.500v9.200h9.200" fill="none" stroke="#b4b4b4" stroke-width="0.900"/></svg>
<svg class="abs" style="left:6px;top:159px" width="16" height="16" viewBox="0 0 16 16"><path d="M4.800 1.500l3.300 10.500h-6.800z" fill="#b4b4b4" stroke="#b4b4b4" stroke-width="0.600" stroke-linejoin="round"/><circle cx="12.600" cy="3.200" r="1.900" fill="#b4b4b4"/><circle cx="10.800" cy="11.300" r="3.400" fill="#1d1d1d" stroke="#b4b4b4" stroke-width="1.100"/><path d="M9 10.200a2 2 0 0 1 1.500-1.200" stroke="#b4b4b4" stroke-width="0.800" fill="none"/></svg>
<svg class="abs" style="left:6px;top:187px" width="16" height="16" viewBox="0 0 16 16"><circle cx="8" cy="8.500" r="6.300" fill="none" stroke="#c0515e" stroke-width="1.100"/><path d="M1.300 15.200l2.500-2.500M12.300 4.200l2.600-2.600" stroke="#c0515e" stroke-width="1.100"/><path d="M3.500 5.500c1.500-2 3.500-2.300 4.800-1.700l-1 1.700l1.300 1l-1.600 1.600l-1.500-0.300l-1 1.500z M7.600 9.300l2.800 0.500l1.300 1.500l-1.200 2.300l-1.700 0.300l-0.300-2z" fill="#c0515e"/></svg>
<svg class="abs" style="left:6px;top:223px" width="16" height="16" viewBox="0 0 16 16"><rect x="4.300" y="4.300" width="7.400" height="7.400" fill="#d18c50"/><path d="M1.500 4.500v-3h3 M11.500 1.500h3v3 M14.500 11.500v3h-3 M4.500 14.500h-3v-3" fill="none" stroke="#d18c50" stroke-width="1"/></svg>
<svg class="abs" style="left:6px;top:251px" width="16" height="16" viewBox="0 0 16 16"><circle cx="7.300" cy="8.700" r="3" fill="#6d8fd8"/><circle cx="12.700" cy="3.500" r="1.900" fill="#5a73b0"/><path d="M13.600 11.500a6.300 6.300 0 1 1-4-8.700" fill="none" stroke="#6d8fd8" stroke-width="1"/></svg>
<svg class="abs" style="left:6px;top:279px" width="16" height="16" viewBox="0 0 16 16"><path d="M13 1.700c1.500-0.300 2.300 0.800 1.800 2.200l-2.500 7.300a5.800 5.800 0 1 1-7-6.500z" fill="none" stroke="#6d8fd8" stroke-width="1"/><circle cx="6.800" cy="9.700" r="3.200" fill="none" stroke="#6d8fd8" stroke-width="1.700"/><circle cx="12.500" cy="4" r="1" fill="#6d8fd8"/></svg>
<svg class="abs" style="left:6px;top:307px" width="16" height="16" viewBox="0 0 16 16"><circle cx="7.400" cy="2.400" r="1.700" fill="#15c18f"/><path d="M1 1.500l3 3.200l4.300-0.200l3.200 0.500l3 2.800 M8.300 4.500l-1.500 4.200l3 3.400l5 1.500 M6.800 8.700c-2.500 0.800-3.800 3-4.300 6" fill="none" stroke="#15c18f" stroke-width="1.100" stroke-linejoin="round" stroke-linecap="round"/></svg>
<svg class="abs" style="left:6px;top:335px" width="16" height="16" viewBox="0 0 16 16"><path d="M4.500 4.500l7 7" stroke="#15c18f" stroke-width="3.200"/><circle cx="2.900" cy="5.300" r="1.900" fill="#15c18f"/><circle cx="5.300" cy="2.900" r="1.900" fill="#15c18f"/><circle cx="10.700" cy="13.100" r="1.900" fill="#15c18f"/><circle cx="13.100" cy="10.700" r="1.900" fill="#15c18f"/></svg>
<svg class="abs" style="left:6px;top:363px" width="16" height="16" viewBox="0 0 16 16"><path d="M4 4.500l8 8" stroke="#6d8fd8" stroke-width="2.300"/><circle cx="2.200" cy="4.500" r="1.300" fill="#6d8fd8"/><circle cx="4.300" cy="2.300" r="1.300" fill="#6d8fd8"/><circle cx="11.700" cy="14.500" r="1.300" fill="#6d8fd8"/><circle cx="13.900" cy="12.300" r="1.300" fill="#6d8fd8"/><path d="M4.300 8.300c-1.800 3.200 0.500 5.800 3.300 5 M8 4.300c3-2.800 6.500-1.500 6 1.800l-1.200 3.800" fill="none" stroke="#6d8fd8" stroke-width="1"/><circle cx="11.300" cy="5" r="0.900" fill="#6d8fd8"/></svg>
</div>
</body>
</html>
